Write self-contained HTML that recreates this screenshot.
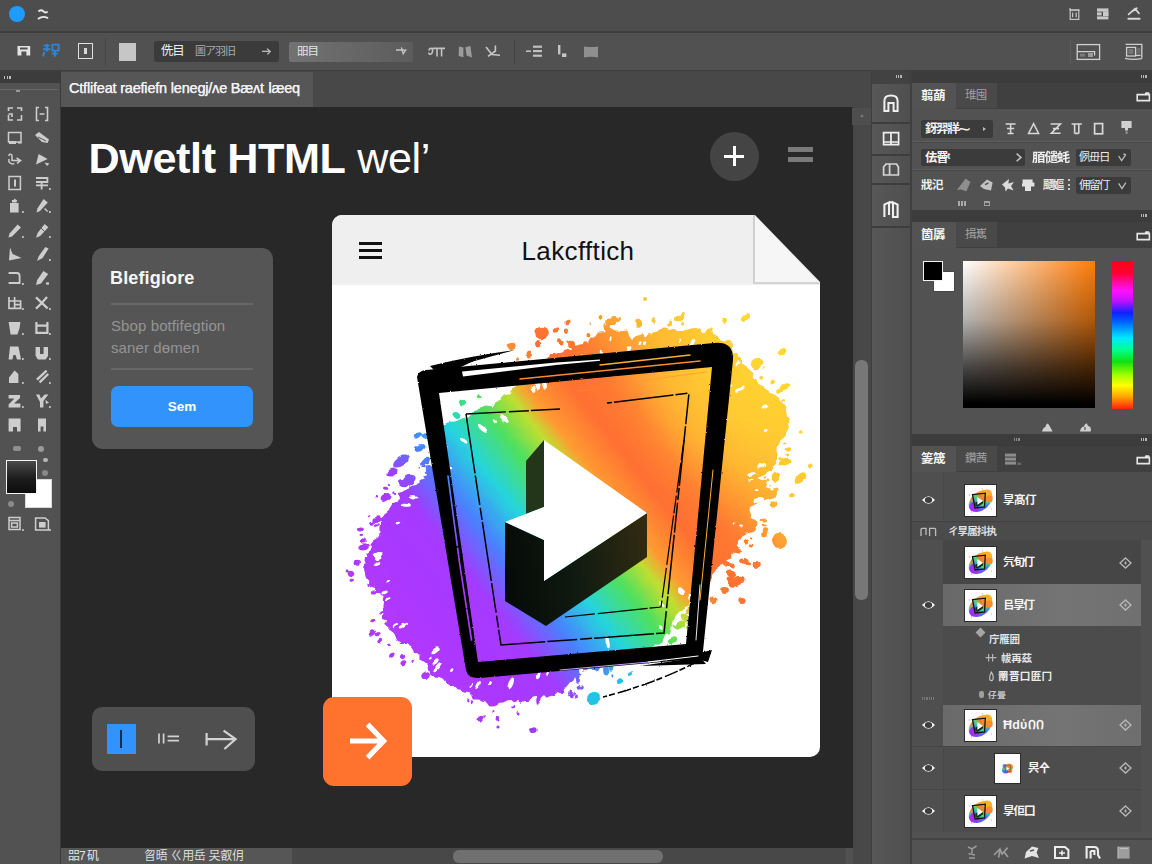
<!DOCTYPE html>
<html lang="en">
<head>
<meta charset="utf-8">
<title>Dwetlt HTML wel</title>
<style>
*{box-sizing:border-box;margin:0;padding:0}
html,body{width:1152px;height:864px;overflow:hidden;background:#282828}
body{font-family:"Liberation Sans","Noto Sans CJK SC",sans-serif;color:#e6e6e6;position:relative}
.abs{position:absolute}
.cj{font-family:"Liberation Sans","Noto Sans CJK SC",sans-serif;white-space:nowrap;line-height:1}
svg{position:absolute;overflow:visible}
/* ---------- top bars ---------- */
#title{left:0;top:0;width:1152px;height:32px;background:#4d4d4d}
#titleline{left:0;top:31px;width:1152px;height:2px;background:#3d3d3d}
#opts{left:0;top:33px;width:1152px;height:38px;background:#515151}
#optsline{left:0;top:70px;width:1152px;height:1px;background:#3f3f3f}
/* ---------- left toolbar ---------- */
#tools{left:0;top:71px;width:60px;height:793px;background:#525252}
#toolshead{left:0;top:71px;width:60px;height:12px;background:#3c3c3c}
#toolsedge{left:60px;top:71px;width:1px;height:793px;background:#3a3a3a}
/* ---------- tab bar ---------- */
#tabbar{left:61px;top:71px;width:811px;height:36px;background:#484848}
#tab{left:61px;top:72px;width:252px;height:35px;background:#565656}
#tabtxt{left:69px;top:80px;font-size:14.5px;color:#f2f2f2;letter-spacing:-0.2px;white-space:nowrap;text-shadow:0 0 .6px #ddd;-webkit-text-stroke:.25px #f2f2f2}
/* ---------- canvas ---------- */
#canvas{left:61px;top:107px;width:792px;height:741px;background:#282828}
#vscroll{left:853px;top:107px;width:18px;height:741px;background:#484848}
#vthumb{left:855px;top:360px;width:13px;height:240px;border-radius:6px;background:#777}
#status{left:61px;top:848px;width:811px;height:16px;background:#484848}
#hthumb{left:453px;top:850px;width:210px;height:13px;border-radius:6px;background:#707070}
/* ---------- right column ---------- */
#rgap{left:871px;top:71px;width:281px;height:793px;background:#3e3e3e}
#strip{left:872px;top:84px;width:39px;height:780px;background:linear-gradient(90deg,#575757,#4f4f4f)}
#rpanel{left:912px;top:71px;width:240px;height:793px;background:#525252}
</style>
</head>
<body>
<!-- top bars -->
<div id="title" class="abs"></div>
<div id="titleline" class="abs"></div>
<div id="opts" class="abs"></div>
<div id="optsline" class="abs"></div>
<!-- left toolbar -->
<div id="tools" class="abs"></div>
<div id="toolshead" class="abs"></div>
<div id="toolsedge" class="abs"></div>
<!-- tab bar -->
<div id="tabbar" class="abs"></div>
<div id="tab" class="abs"></div>
<div id="tabtxt" class="abs">Ctflifeat raefiefn lenegj/ʌe Bæʌt ⅼæeq</div>
<!-- canvas -->
<div id="canvas" class="abs"></div>
<div id="vscroll" class="abs"></div>
<div id="vthumb" class="abs"></div>
<div id="status" class="abs"></div>
<div id="hthumb" class="abs"></div>
<!-- right column -->
<div id="rgap" class="abs"></div>
<div id="strip" class="abs"></div>
<div id="rpanel" class="abs"></div>

<!-- title bar content -->
<div class="abs" style="left:9px;top:6px;width:16px;height:16px;border-radius:50%;background:#1e9bff"></div>
<svg style="left:37px;top:8px" width="12" height="13" viewBox="0 0 12 13"><path d="M2 3 Q4.4 1.2 6.2 3.2 T10 4 M1.6 10.6 Q5.6 7.6 10.4 9.8" fill="none" stroke="#e8e8e8" stroke-width="1.9" stroke-linecap="round"/></svg>
<svg style="left:1068px;top:7px" width="76" height="15" viewBox="0 0 76 15">
 <g fill="none" stroke="#c4c4c4" stroke-width="1.2">
  <rect x="2.2" y="3" width="8.6" height="9.4"/><path d="M2 1 V3 M4.6 5.4 V10.2 M8.2 5.4 V10.2 M1.6 3.2 H11.6"/>
 </g>
 <g fill="#c9c9c9"><rect x="29" y="1.4" width="11.4" height="3.2"/><rect x="29" y="5.4" width="4.6" height="3"/><rect x="35" y="4.4" width="5.6" height="4.6"/><rect x="29" y="9.4" width="11.4" height="3"/></g>
 <g fill="none" stroke="#d6d6d6" stroke-width="1.7" stroke-linecap="round"><path d="M60.6 7.4 L67 1.6 L71 6.4 M64 4.6 L68.8 1.2"/><path d="M60.4 11.8 H71.6" stroke-width="2"/></g>
</svg>
<!-- options bar content -->
<svg style="left:16px;top:43px" width="16" height="15" viewBox="0 0 16 15"><path d="M1.5 3 H14.2 V12.6 H10.4 V8.4 H5.4 V12.6 H1.5 Z M4 4.6 H11.6 V6.4 H4 Z" fill="#e4e4e4" fill-rule="evenodd"/></svg>
<svg style="left:41px;top:43px" width="20" height="16" viewBox="0 0 20 16"><path d="M2.4 2.6 H8.8 M6 1 V8.4 M2 6.2 H9.4 M3.6 8.8 L2 13.4 M11.4 1.6 H17.6 V7.6 H11.4 Z M13.8 7.6 V13.8 M10.8 10.6 H16.6" fill="none" stroke="#2f86d4" stroke-width="1.9"/></svg>
<div class="abs" style="left:78px;top:43px;width:15px;height:16px;border:1.6px solid #e0e0e0"></div>
<div class="abs" style="left:84px;top:48px;width:3px;height:6px;background:#d8d8d8"></div>
<div class="abs" style="left:105px;top:38px;width:1px;height:28px;background:#464646"></div>
<div class="abs" style="left:119px;top:43px;width:17px;height:18px;background:#c6c6c6"></div>
<div class="abs" style="left:154px;top:41px;width:125px;height:21px;border-radius:3px;background:#3b3b3b"></div>
<div class="abs cj" style="left:161px;top:45px;font-size:12.5px;color:#ececec;letter-spacing:-1.2px">侁目</div>
<div class="abs cj" style="left:195px;top:46px;font-size:11px;color:#a9a9a9;letter-spacing:-1px">圖ア羽旧</div>
<svg style="left:261px;top:47px" width="11" height="9" viewBox="0 0 11 9"><path d="M1 4.4 H9 M6 1.6 L9.2 4.6 L6.4 7.4" fill="none" stroke="#bdbdbd" stroke-width="1.3"/></svg>
<div class="abs" style="left:289px;top:42px;width:124px;height:20px;border-radius:2px;background:linear-gradient(90deg,#727272,#686868 45%,#5c5c5c)"></div>
<div class="abs cj" style="left:297px;top:46px;font-size:11.5px;color:#e4e4e4;letter-spacing:-1px">昍目</div>
<svg style="left:395px;top:46px" width="13" height="10" viewBox="0 0 13 10"><path d="M1 4 H9.6 M6.4 1.4 L8.2 7.8 L11.2 3.4" fill="none" stroke="#c8c8c8" stroke-width="1.3"/></svg>
<svg style="left:426px;top:42px" width="176" height="20" viewBox="0 0 176 20">
 <g fill="none" stroke="#c2c2c2" stroke-width="1.6"><path d="M3 8.6 C3 5.6 7 5.6 6.6 9 C6.2 13.2 2.6 13 2.8 10.6 M6.6 6.4 H19 M11 6.4 V14.4 M15.6 6.4 V14.4"/></g>
 <path d="M33 4.4 L37.4 5.6 V15.2 L32.6 14 Z M39.4 5.2 L44.4 4 L46 15.6 L40.6 13.6 Z" fill="#9c9c9c"/>
 <g fill="none" stroke="#c6c6c6" stroke-width="1.6"><path d="M60 5 L66 12.6 L74 13.2 M69.4 3.6 V9 L62 14.4"/></g>
 <rect x="88" y="-2" width="1" height="24" fill="#444"/>
 <g fill="#c0c0c0"><rect x="100" y="8.4" width="5" height="1.6"/><rect x="107" y="3.6" width="9" height="2.2"/><rect x="107" y="8" width="9" height="2.2"/><rect x="107" y="12.6" width="9" height="2.2"/></g>
 <g fill="#c4c4c4"><rect x="132" y="3" width="2.4" height="9.4"/><rect x="136" y="11.4" width="4.4" height="3.6"/></g>
 <path d="M158 4.4 C162 5.2 168 5.2 172 4.4 V15.4 C168 14.6 162 14.6 158 15.4 Z" fill="#8f8f8f"/>
</svg>
<div class="abs" style="left:1070px;top:40px;width:1px;height:24px;background:#5e5e5e"></div>
<svg style="left:1076px;top:43px" width="70" height="18" viewBox="0 0 70 18">
 <g fill="none" stroke="#d0d0d0" stroke-width="1.3"><rect x="1.2" y="1.6" width="22.4" height="14.8"/><path d="M1.2 8.6 H18.6 V12.4"/></g>
 <rect x="4" y="10.6" width="5" height="3" fill="#7a7a7a"/><rect x="12" y="10" width="5" height="4" fill="#9a9a9a"/>
 <g fill="none" stroke="#d0d0d0" stroke-width="1.3"><path d="M49.6 1.4 H65.8 V15.6 M49 15.4 C54 16.4 60 16.6 65.8 15.6"/><rect x="50.6" y="4.4" width="9" height="8.6"/><path d="M59.6 12.4 H64.6"/></g>
 <rect x="52.4" y="6" width="5" height="5" fill="#777"/><rect x="61" y="5" width="3.6" height="5.6" fill="#6a6a6a"/>
</svg>
<!--TOPBAR-->
<!-- left toolbar icons -->
<div class="abs" style="left:4px;top:76px;width:7px;height:3px;background:repeating-linear-gradient(90deg,#bdbdbd 0 1.4px,transparent 1.4px 2.6px)"></div>
<div class="abs" style="left:0;top:89px;width:58px;height:1px;background:#666"></div>
<div class="abs" style="left:16px;top:90px;width:4px;height:2px;background:#9a9a9a"></div>
<svg style="left:7px;top:106px" width="18" height="17" viewBox="0 0 18 17"><path d="M1.5 5 V2 H6 M10 2 H14.5 V5 M14.5 9 V14 H10 M6 14 H1.5 V9 M1.5 8 H5 V11" fill="none" stroke="#cdcdcd" stroke-width="1.6"/></svg>
<svg style="left:34px;top:106px" width="18" height="17" viewBox="0 0 18 17"><path d="M5 1.5 H2.5 V14.5 H5 M11 1.5 H13.5 V14.5 H11 M5.6 8 H10.4" fill="none" stroke="#cdcdcd" stroke-width="1.6"/></svg>
<svg style="left:7px;top:130px" width="18" height="17" viewBox="0 0 18 17"><path d="M1.5 2.5 H14 V12 H1.5 Z" fill="none" stroke="#cdcdcd" stroke-width="1.5"/><path d="M2 11 H9 V14 H2 Z" fill="#cdcdcd"/><path d="M11 12 H14.6 V13.6 H11 Z" fill="#cdcdcd"/></svg>
<svg style="left:34px;top:130px" width="18" height="17" viewBox="0 0 18 17"><path d="M1 5 L5 2 L15 9.4 L13.6 13 L8 12 Z" fill="#cdcdcd"/><path d="M4 7 L12 11" fill="none" stroke="#555" stroke-width="1"/></svg>
<svg style="left:7px;top:152px" width="18" height="17" viewBox="0 0 18 17"><path d="M2 4 C2 1.4 5 1.6 5 4 V8.6 H12 M9.6 6 L13.6 8.6 L10 11.4 M2 7 C1 10.6 4 12.6 7.4 11.6" fill="none" stroke="#cdcdcd" stroke-width="1.5"/></svg>
<svg style="left:34px;top:152px" width="18" height="17" viewBox="0 0 18 17"><path d="M2 12.6 L4.6 2 L13.6 7 Z" fill="#cdcdcd"/><path d="M10.6 10.6 L15.4 11.6 L13 14 Z" fill="#cdcdcd"/></svg>
<svg style="left:7px;top:175px" width="18" height="17" viewBox="0 0 18 17"><path d="M2 1.6 H13.4 V14.4 H2 Z" fill="none" stroke="#cdcdcd" stroke-width="1.5"/><path d="M7 4.4 H9 V11.4 H7 Z" fill="#cdcdcd"/></svg>
<svg style="left:34px;top:175px" width="18" height="17" viewBox="0 0 18 17"><path d="M2 3 H13.4 V7 H2 M2 10.4 H14 M7.6 7 V14.4" fill="none" stroke="#cdcdcd" stroke-width="1.8"/><rect x="15" y="13" width="1.8" height="2" fill="#bdbdbd"/></svg>
<svg style="left:7px;top:198px" width="18" height="17" viewBox="0 0 18 17"><path d="M3 5 H11.6 V14.6 H3 Z M5 2 H9.6 V4.4 H5 Z" fill="#cdcdcd"/><path d="M7 1 L10 3" fill="none" stroke="#cdcdcd" stroke-width="1.2"/><rect x="15" y="13" width="1.8" height="2" fill="#bdbdbd"/></svg>
<svg style="left:34px;top:198px" width="18" height="17" viewBox="0 0 18 17"><path d="M9.6 1 L13.8 4.6 L6 13 L2.6 14.6 L3.4 10.4 Z" fill="#cdcdcd"/><path d="M10.6 10.6 L13.6 13.6" fill="none" stroke="#cdcdcd" stroke-width="1.4"/><rect x="15" y="13" width="1.8" height="2" fill="#bdbdbd"/></svg>
<svg style="left:7px;top:223px" width="18" height="17" viewBox="0 0 18 17"><path d="M10.6 1.4 L14 4.4 L5 13.6 L1.4 14.4 L2.6 10.4 Z" fill="#cdcdcd"/><rect x="15" y="13" width="1.8" height="2" fill="#bdbdbd"/></svg>
<svg style="left:34px;top:223px" width="18" height="17" viewBox="0 0 18 17"><path d="M10.6 1 L14.4 4.2 L6.2 13 L2 14.8 L3.6 10 Z" fill="#cdcdcd"/><path d="M6 4 L10.6 8.6" fill="none" stroke="#555" stroke-width="1"/><rect x="15" y="13" width="1.8" height="2" fill="#bdbdbd"/></svg>
<svg style="left:7px;top:246px" width="18" height="17" viewBox="0 0 18 17"><path d="M3 1.4 L5.6 8 L14.6 12 L2 14.4 Z" fill="#cdcdcd"/></svg>
<svg style="left:34px;top:246px" width="18" height="17" viewBox="0 0 18 17"><path d="M11.4 1 L14.6 2.6 L8.6 12 L3 15 L4.6 10.4 Z" fill="#cdcdcd"/><rect x="15" y="13" width="1.8" height="2" fill="#bdbdbd"/></svg>
<svg style="left:7px;top:270px" width="18" height="17" viewBox="0 0 18 17"><path d="M1.6 3 H10 C12.6 3 12.6 5 12.6 6 V13 H1.6" fill="none" stroke="#cdcdcd" stroke-width="1.8"/><rect x="15" y="13" width="1.8" height="2" fill="#bdbdbd"/></svg>
<svg style="left:34px;top:270px" width="18" height="17" viewBox="0 0 18 17"><path d="M9.4 1 L14.2 4 L7 13.4 L2 15 L3.2 10 Z" fill="#cdcdcd"/><path d="M12 12.4 H15 V14.6 H12 Z" fill="#cdcdcd"/></svg>
<svg style="left:7px;top:295px" width="18" height="17" viewBox="0 0 18 17"><path d="M2 2 V13.4 H13.6 V6 H2 M7.6 2 V13.4 M7.6 9.6 H13.6" fill="none" stroke="#cdcdcd" stroke-width="1.7"/><rect x="15" y="13" width="1.8" height="2" fill="#bdbdbd"/></svg>
<svg style="left:34px;top:295px" width="18" height="17" viewBox="0 0 18 17"><path d="M2 2.4 L13.6 13.4 M13 2 L7.8 8 L2 13.6" fill="none" stroke="#cdcdcd" stroke-width="2.2"/><rect x="15" y="13" width="1.8" height="2" fill="#bdbdbd"/></svg>
<svg style="left:7px;top:320px" width="18" height="17" viewBox="0 0 18 17"><path d="M1.6 2 H13.4 L12.6 8 L10.4 14.4 H3.6 L2.6 8 Z" fill="#cdcdcd"/><rect x="15" y="13" width="1.8" height="2" fill="#bdbdbd"/></svg>
<svg style="left:34px;top:320px" width="18" height="17" viewBox="0 0 18 17"><path d="M2.4 2 V12.8 H13.4 V2 M2.4 5.6 H13.4" fill="none" stroke="#cdcdcd" stroke-width="2.2"/><rect x="15" y="13" width="1.8" height="2" fill="#bdbdbd"/></svg>
<svg style="left:7px;top:345px" width="18" height="17" viewBox="0 0 18 17"><path d="M3 1.6 H11.4 L12.6 7 L14 14.6 H10 L8.6 10 H6.4 L5.4 14.6 H1.6 Z" fill="#cdcdcd"/><rect x="15" y="13" width="1.8" height="2" fill="#bdbdbd"/></svg>
<svg style="left:34px;top:345px" width="18" height="17" viewBox="0 0 18 17"><path d="M1.6 2 H6 V9 H9.6 V2 H14 V11 L11.6 14.4 H4 L1.6 11 Z" fill="#cdcdcd"/><rect x="15" y="13" width="1.8" height="2" fill="#bdbdbd"/></svg>
<svg style="left:7px;top:369px" width="18" height="17" viewBox="0 0 18 17"><path d="M7.6 1.4 L11.4 5 V14 H2 V8.6 Z" fill="#cdcdcd"/><rect x="15" y="13" width="1.8" height="2" fill="#bdbdbd"/></svg>
<svg style="left:34px;top:369px" width="18" height="17" viewBox="0 0 18 17"><path d="M12.6 1.6 L3 10.6 M14.2 5 L5.6 13.4" fill="none" stroke="#cdcdcd" stroke-width="2.4"/><rect x="15" y="13" width="1.8" height="2" fill="#bdbdbd"/></svg>
<svg style="left:7px;top:393px" width="18" height="17" viewBox="0 0 18 17"><path d="M1.6 2 H13 V5 L7 10.6 H13.4 V14.4 H1.6 V11.4 L7.4 5.4 H1.6 Z" fill="#cdcdcd"/><rect x="15" y="13" width="1.8" height="2" fill="#bdbdbd"/></svg>
<svg style="left:34px;top:393px" width="18" height="17" viewBox="0 0 18 17"><path d="M2 1.6 H5.4 L7 5.4 L10.6 1.6 H14.4 L9.4 8 V14.6 H6 V9 Z" fill="#cdcdcd"/><path d="M11.4 7 L15 9.6 L12 11 Z" fill="#cdcdcd"/><rect x="15" y="13" width="1.8" height="2" fill="#bdbdbd"/></svg>
<svg style="left:7px;top:417px" width="18" height="17" viewBox="0 0 18 17"><path d="M1.6 1.6 H13.6 V14.4 H10 V10 H6 V14.4 H1.6 Z M5 4.6 H10 V7 H5 Z" fill="#cdcdcd"/></svg>
<svg style="left:34px;top:417px" width="18" height="17" viewBox="0 0 18 17"><path d="M4 1.4 H12 V14.6 H9.4 V9.6 H6.6 V14.6 H4 Z" fill="#cdcdcd"/></svg>
<div class="abs" style="left:13px;top:446px;width:8px;height:5px;border-radius:2px;background:#8f8f8f"></div>
<div class="abs" style="left:38px;top:446px;width:6px;height:6px;border-radius:3px;background:#9a9a9a"></div>
<div class="abs" style="left:43px;top:458px;width:5px;height:4px;border-radius:2px;background:#b5b5b5"></div>
<div class="abs" style="left:42px;top:470px;width:6px;height:6px;border-radius:3px;background:#888"></div>
<div class="abs" style="left:8px;top:501px;width:6px;height:6px;border-radius:3px;background:#8a8a8a"></div>
<div class="abs" style="left:25px;top:479px;width:27px;height:29px;background:#fff;border:1px solid #d8d8d8;box-shadow:0 0 0 1px #555"></div>
<div class="abs" style="left:6px;top:460px;width:31px;height:34px;background:linear-gradient(180deg,#4a4a4a,#1c1c1c 55%,#0c0c0c);border:1.6px solid #f4f4f4"></div>
<svg style="left:7px;top:516px" width="18" height="17" viewBox="0 0 18 17"><path d="M2 1.6 H13 V13.6 H2 Z M2 4.4 H13 M4.6 7 H10.4 V11 H4.6 Z" fill="none" stroke="#cdcdcd" stroke-width="1.5"/><rect x="15" y="13" width="1.8" height="2" fill="#bdbdbd"/></svg>
<svg style="left:34px;top:516px" width="18" height="17" viewBox="0 0 18 17"><path d="M1.6 2 H11 L14.4 4.6 V14 H1.6 Z" fill="none" stroke="#cdcdcd" stroke-width="1.5"/><path d="M5 6 H11.6 V11.6 H5 Z" fill="#cdcdcd"/><rect x="15" y="13" width="1.8" height="2" fill="#bdbdbd"/></svg>
<!--TOOLS-->

<!-- canvas content -->
<div class="abs" style="left:88.5px;top:133px;font-size:43.2px;line-height:50px;color:#fff;white-space:nowrap;letter-spacing:-0.4px"><b>Dwetlt HTML</b> wel’</div>
<div class="abs" style="left:710px;top:132px;width:49px;height:49px;border-radius:50%;background:#444"></div>
<div class="abs" style="left:724px;top:155px;width:20px;height:2.6px;background:#fff"></div>
<div class="abs" style="left:733px;top:146px;width:2.6px;height:20px;background:#fff"></div>
<div class="abs" style="left:788px;top:147px;width:25px;height:4.5px;background:#7a7a7a"></div>
<div class="abs" style="left:788px;top:157px;width:25px;height:4.5px;background:#7a7a7a"></div>
<!-- left card -->
<div class="abs" style="left:92px;top:248px;width:181px;height:201px;border-radius:11px;background:#555"></div>
<div class="abs" style="left:110px;top:267px;font-size:18px;line-height:22px;color:#f7f7f7;font-weight:bold;white-space:nowrap;letter-spacing:0.15px">Blefigiore</div>
<div class="abs" style="left:111px;top:303px;width:142px;height:2px;background:#676767"></div>
<div class="abs" style="left:111px;top:315px;font-size:15px;line-height:21.5px;color:#949494;white-space:nowrap;letter-spacing:0.1px">Sbop botfifegtion<br>saner dөmen</div>
<div class="abs" style="left:111px;top:368px;width:142px;height:2px;background:#676767"></div>
<div class="abs" style="left:111px;top:386px;width:142px;height:41px;border-radius:7px;background:#3393fc;color:#fff;font-size:13.5px;font-weight:bold;text-align:center;line-height:42px">Sem</div>
<!-- bottom-left widget -->
<div class="abs" style="left:92px;top:707px;width:163px;height:64px;border-radius:10px;background:#4f4f4f"></div>
<div class="abs" style="left:107px;top:724px;width:29px;height:30px;background:#3393fc"></div>
<div class="abs" style="left:120px;top:730px;width:2.4px;height:18px;background:#1c2c44"></div>
<svg style="left:156px;top:730px" width="84" height="22" viewBox="0 0 84 22"><g fill="none" stroke="#d2d2d2" stroke-width="1.7"><path d="M3 3.6 V13.6 M7.6 3.6 V13.6 M11.6 6.4 H23 M11.6 10.6 H23"/><path d="M50.6 3 V15.4 M50.6 9.2 H78 M67.6 0.6 L79.6 9.2 L68.4 19" stroke-width="2.2" stroke-linejoin="miter"/></g></svg>
<!-- document card -->
<div class="abs" style="left:332px;top:215px;width:488px;height:542px;border-radius:10px;background:#fff;overflow:hidden">
 <div style="position:absolute;left:0;top:0;width:488px;height:70px;background:#efefef"></div>
</div>
<svg style="left:0;top:0" width="1152" height="864" viewBox="0 0 1152 864">
 <path d="M753 213 H822 V284 Z" fill="#282828"/>
 <path d="M754 215 L819 283 H754 Z" fill="#f6f6f6"/>
 <path d="M754 215 V283 H819" fill="none" stroke="#c9c9c9" stroke-width="1.6"/>
 <path d="M359 243.5 H382 M359 250.5 H382 M359 257.5 H382" stroke="#111" stroke-width="3"/>
</svg>
<div class="abs" style="left:334px;top:235px;width:488px;text-align:center;font-size:26px;line-height:32px;color:#111;letter-spacing:0.35px;white-space:nowrap">Lakcfftich</div>
<!--ART_START--><svg style="left:0;top:0" width="1152" height="864" viewBox="0 0 1152 864">
<defs>
<linearGradient id="rb" gradientUnits="userSpaceOnUse" x1="412.2" y1="641.1" x2="774.7" y2="357.8"><stop offset="0.000" stop-color="#b038ff"/><stop offset="0.185" stop-color="#a43aff"/><stop offset="0.270" stop-color="#4a80ff"/><stop offset="0.352" stop-color="#25d5dd"/><stop offset="0.435" stop-color="#4ee060"/><stop offset="0.496" stop-color="#c0de30"/><stop offset="0.535" stop-color="#ff9a30"/><stop offset="0.613" stop-color="#ff7030"/><stop offset="0.691" stop-color="#ff7a30"/><stop offset="0.772" stop-color="#ffa430"/><stop offset="0.843" stop-color="#ffc630"/><stop offset="1.000" stop-color="#ffd830"/></linearGradient>
<linearGradient id="dk" gradientUnits="userSpaceOnUse" x1="505" y1="560" x2="650" y2="540"><stop offset="0" stop-color="#060b08"/><stop offset=".45" stop-color="#0f1a10"/><stop offset="1" stop-color="#322c12"/></linearGradient>
<path id="bp" d="M362.0 568.0 L363.4 565.5 L363.8 563.2 L365.8 560.5 L367.6 557.9 L367.0 555.7 L366.4 553.6 L370.3 550.6 L372.0 548.0 L370.5 545.5 L373.1 542.4 L373.4 539.7 L379.0 536.2 L379.4 533.4 L380.6 530.6 L380.3 527.8 L381.0 525.0 L380.7 522.4 L378.0 519.8 L381.9 517.1 L383.4 514.5 L386.6 511.9 L389.5 509.3 L391.2 506.7 L392.0 504.0 L392.0 502.4 L395.9 501.1 L399.0 499.8 L400.4 498.3 L401.0 496.8 L398.6 494.9 L397.8 493.1 L402.0 492.0 L403.9 490.7 L407.1 489.6 L409.2 488.3 L409.2 486.7 L410.8 485.3 L413.8 484.2 L418.4 483.4 L420.0 482.0 L422.0 480.4 L425.3 479.1 L423.2 476.4 L426.1 475.0 L424.6 472.4 L427.1 470.9 L428.2 469.1 L432.0 468.0 L433.3 463.3 L433.6 458.3 L436.9 454.4 L440.2 450.5 L440.9 445.5 L439.9 439.6 L439.5 433.9 L442.0 430.0 L443.2 426.5 L445.5 423.8 L448.8 421.7 L454.8 421.6 L458.9 420.2 L462.7 418.6 L466.9 417.2 L470.0 415.0 L473.6 411.0 L479.9 409.6 L484.7 406.5 L492.9 407.5 L495.8 401.8 L501.1 399.5 L505.1 395.2 L511.0 394.0 L512.4 388.0 L515.5 385.4 L517.7 381.0 L521.2 379.4 L524.1 376.4 L526.4 372.2 L529.0 368.5 L532.0 366.0 L534.9 363.6 L537.8 361.0 L541.9 363.1 L545.2 362.3 L548.1 359.3 L550.4 353.3 L553.8 353.0 L557.0 352.0 L560.3 351.9 L563.5 350.9 L566.7 349.7 L570.2 351.2 L573.3 345.9 L576.6 345.6 L579.8 344.5 L583.0 344.0 L585.8 341.0 L588.4 342.9 L591.4 337.5 L594.0 337.4 L597.2 332.5 L599.8 332.5 L602.4 332.3 L605.0 332.0 L608.6 331.4 L612.4 329.4 L615.6 330.6 L619.1 330.6 L622.4 331.3 L626.1 330.6 L628.4 335.5 L631.0 339.0 L635.3 335.9 L639.0 334.9 L642.8 333.6 L645.0 336.6 L649.6 333.2 L652.8 333.4 L657.1 330.8 L661.0 329.0 L665.9 328.4 L669.9 329.9 L675.1 328.8 L678.7 331.0 L683.4 331.0 L689.4 328.7 L694.3 328.3 L698.0 330.0 L701.5 329.5 L702.4 332.9 L707.0 330.8 L709.6 331.7 L712.9 331.7 L714.2 334.4 L716.4 335.8 L718.0 338.0 L720.6 340.5 L724.2 341.7 L729.4 341.1 L732.3 343.2 L733.0 347.7 L733.9 351.9 L737.2 353.6 L738.0 358.0 L741.2 359.1 L740.7 363.8 L743.8 365.1 L746.7 366.5 L749.1 368.4 L751.4 370.5 L753.6 372.7 L752.0 378.0 L755.3 379.6 L756.2 383.0 L759.0 384.9 L763.2 385.9 L764.6 388.7 L767.9 390.4 L770.1 392.7 L774.0 394.0 L779.0 396.9 L780.1 402.2 L784.7 405.4 L786.0 410.5 L786.7 415.8 L789.1 420.3 L789.4 425.9 L786.0 433.0 L785.4 436.0 L779.8 440.8 L779.8 443.6 L777.5 447.2 L777.3 450.1 L777.3 452.9 L777.3 455.8 L776.0 459.0 L774.5 461.2 L775.0 462.8 L771.9 465.4 L771.8 467.2 L772.3 468.9 L767.8 471.8 L763.6 474.6 L757.0 478.0 L761.3 479.9 L764.3 482.0 L767.3 484.2 L765.6 487.1 L770.1 489.1 L774.1 491.2 L777.2 493.3 L776.0 496.0 L773.7 497.3 L767.5 498.9 L763.3 500.4 L760.4 501.7 L757.4 503.0 L755.5 504.3 L752.4 505.7 L750.0 507.0 L749.5 509.4 L750.2 511.7 L751.3 514.1 L750.6 516.5 L753.5 518.9 L757.3 521.4 L757.4 523.7 L757.0 526.0 L755.4 527.9 L755.9 530.0 L753.6 531.9 L746.8 533.4 L743.7 535.2 L740.8 537.0 L739.8 539.1 L738.0 541.0 L738.0 543.5 L736.3 545.8 L739.0 548.9 L737.3 551.1 L734.4 553.0 L731.2 554.8 L731.4 557.5 L727.0 559.0 L724.7 561.2 L721.3 563.1 L720.0 565.6 L717.5 567.7 L717.0 570.7 L715.4 573.2 L712.3 575.0 L712.0 578.0 L710.9 580.5 L709.3 582.8 L705.9 584.1 L704.0 586.1 L699.3 586.6 L697.3 588.7 L696.2 591.3 L692.0 592.0 L689.3 593.7 L688.1 596.4 L688.5 600.4 L688.3 603.9 L687.5 607.0 L684.4 608.1 L682.8 610.6 L680.0 612.0 L678.1 614.6 L676.5 617.5 L675.1 620.7 L673.0 623.0 L672.1 626.8 L670.3 629.5 L669.2 633.2 L666.0 634.0 L663.4 637.4 L662.2 642.7 L658.5 644.4 L654.0 644.7 L650.7 647.0 L648.0 650.3 L643.8 650.8 L640.0 652.0 L635.6 655.2 L629.9 655.2 L624.6 656.5 L619.1 656.6 L614.6 661.1 L609.9 664.0 L605.2 667.6 L600.0 668.0 L597.8 671.5 L595.1 670.3 L592.4 669.7 L589.8 668.5 L587.3 670.3 L584.8 670.0 L582.4 673.6 L580.0 676.0 L578.7 678.7 L577.5 680.2 L576.2 680.0 L575.0 677.1 L573.7 680.1 L572.4 682.4 L571.2 682.9 L570.0 682.0 L566.4 686.6 L563.0 690.4 L559.5 693.6 L556.6 691.9 L553.0 695.5 L549.8 696.3 L546.5 697.8 L544.0 695.0 L540.2 698.3 L537.4 696.9 L534.2 697.3 L530.8 698.6 L527.4 700.0 L524.4 699.9 L520.5 702.8 L518.0 701.0 L514.0 702.3 L511.3 699.9 L507.6 700.2 L503.3 702.4 L499.5 702.8 L494.9 705.3 L491.3 705.4 L488.0 705.0 L485.5 701.5 L481.9 700.4 L478.2 699.4 L473.8 699.5 L472.1 695.1 L469.0 693.0 L464.8 692.5 L462.0 690.0 L457.4 689.3 L454.9 685.7 L449.3 686.2 L446.5 683.2 L443.9 679.8 L440.2 678.0 L435.1 677.6 L432.0 675.0 L429.1 672.5 L428.0 668.3 L426.5 664.4 L423.6 661.9 L420.4 659.7 L420.5 654.5 L415.3 653.9 L414.0 650.0 L411.4 646.6 L407.6 644.0 L400.4 644.0 L397.1 641.2 L395.4 637.3 L393.9 633.3 L390.5 630.4 L388.0 627.0 L385.2 625.0 L387.1 620.4 L383.2 619.0 L382.8 615.6 L383.9 611.6 L383.5 608.3 L383.5 604.7 L384.0 601.0 L383.8 599.0 L384.7 596.5 L382.9 595.2 L380.9 594.0 L378.5 592.8 L374.7 592.2 L375.1 590.0 L375.0 588.0 L370.6 586.4 L369.1 583.8 L369.2 580.8 L366.4 578.6 L365.3 576.0 L365.7 572.9 L363.6 570.5 Z"/><clipPath id="bc"><use href="#bp"/></clipPath>
<radialGradient id="yl" gradientUnits="userSpaceOnUse" cx="795" cy="345" r="195"><stop offset="0" stop-color="#ffd832"/><stop offset=".45" stop-color="#ffcc30"/><stop offset=".7" stop-color="#ffb830" stop-opacity=".75"/><stop offset=".88" stop-color="#ff9a30" stop-opacity=".3"/><stop offset="1" stop-color="#ff8a30" stop-opacity="0"/></radialGradient>
<filter id="rough" x="-5%" y="-5%" width="110%" height="110%"><feTurbulence type="fractalNoise" baseFrequency="0.09" numOctaves="2" seed="3" result="n"/><feDisplacementMap in="SourceGraphic" in2="n" scale="5" xChannelSelector="R" yChannelSelector="G"/></filter>
<filter id="rough2" x="-5%" y="-5%" width="110%" height="110%"><feTurbulence type="fractalNoise" baseFrequency="0.5" numOctaves="1" seed="8" result="n"/><feDisplacementMap in="SourceGraphic" in2="n" scale="2.2" xChannelSelector="R" yChannelSelector="G"/></filter>
</defs>
<g filter="url(#rough)"><g fill="url(#rb)"><use href="#bp"/><ellipse cx="364.2" cy="540.5" rx="2.8" ry="2.0" transform="rotate(173 364.2 540.5)"/><ellipse cx="385.7" cy="488.3" rx="2.7" ry="1.5" transform="rotate(-172 385.7 488.3)"/><ellipse cx="426.3" cy="462.6" rx="1.8" ry="1.5" transform="rotate(-161 426.3 462.6)"/><ellipse cx="494.3" cy="383.2" rx="2.6" ry="2.0" transform="rotate(-123 494.3 383.2)"/><ellipse cx="581.8" cy="687.6" rx="2.1" ry="2.0" transform="rotate(89 581.8 687.6)"/><ellipse cx="394.7" cy="493.8" rx="1.5" ry="1.2" transform="rotate(-173 394.7 493.8)"/><ellipse cx="361.3" cy="534.9" rx="1.8" ry="1.2" transform="rotate(175 361.3 534.9)"/><ellipse cx="638.1" cy="321.6" rx="3.0" ry="3.0" transform="rotate(-73 638.1 321.6)"/><ellipse cx="575.4" cy="697.0" rx="1.6" ry="1.5" transform="rotate(91 575.4 697.0)"/><ellipse cx="368.1" cy="584.5" rx="1.8" ry="1.5" transform="rotate(162 368.1 584.5)"/><ellipse cx="561.5" cy="342.8" rx="2.8" ry="2.0" transform="rotate(-96 561.5 342.8)"/><ellipse cx="614.5" cy="323.2" rx="1.8" ry="1.5" transform="rotate(-80 614.5 323.2)"/><ellipse cx="378.3" cy="525.3" rx="1.6" ry="1.0" transform="rotate(177 378.3 525.3)"/><ellipse cx="569.6" cy="693.1" rx="2.6" ry="1.5" transform="rotate(93 569.6 693.1)"/><ellipse cx="426.4" cy="436.7" rx="4.3" ry="3.0" transform="rotate(-153 426.4 436.7)"/><ellipse cx="764.3" cy="525.9" rx="2.7" ry="1.5" transform="rotate(3 764.3 525.9)"/><ellipse cx="800.7" cy="431.9" rx="2.0" ry="1.5" transform="rotate(-21 800.7 431.9)"/><ellipse cx="774.0" cy="474.1" rx="1.1" ry="1.0" transform="rotate(-12 774.0 474.1)"/><ellipse cx="708.3" cy="331.0" rx="4.2" ry="2.5" transform="rotate(-55 708.3 331.0)"/><ellipse cx="377.7" cy="634.2" rx="2.1" ry="2.0" transform="rotate(149 377.7 634.2)"/><ellipse cx="560.0" cy="340.8" rx="2.6" ry="2.0" transform="rotate(-96 560.0 340.8)"/><ellipse cx="787.7" cy="455.0" rx="1.5" ry="1.5" transform="rotate(-16 787.7 455.0)"/><ellipse cx="761.0" cy="378.3" rx="2.6" ry="2.0" transform="rotate(-37 761.0 378.3)"/><ellipse cx="699.7" cy="605.9" rx="2.1" ry="1.5" transform="rotate(37 699.7 605.9)"/><ellipse cx="346.6" cy="570.0" rx="2.0" ry="1.5" transform="rotate(167 346.6 570.0)"/><ellipse cx="377.9" cy="516.8" rx="1.6" ry="1.5" transform="rotate(180 377.9 516.8)"/><ellipse cx="606.7" cy="670.4" rx="4.0" ry="2.5" transform="rotate(80 606.7 670.4)"/><ellipse cx="688.5" cy="626.0" rx="1.6" ry="1.5" transform="rotate(45 688.5 626.0)"/><ellipse cx="350.5" cy="573.4" rx="3.9" ry="3.5" transform="rotate(166 350.5 573.4)"/><ellipse cx="612.4" cy="676.0" rx="1.7" ry="1.0" transform="rotate(78 612.4 676.0)"/><ellipse cx="519.0" cy="714.0" rx="1.6" ry="1.5" transform="rotate(107 519.0 714.0)"/><ellipse cx="374.0" cy="522.5" rx="1.6" ry="1.2" transform="rotate(178 374.0 522.5)"/><ellipse cx="731.0" cy="574.4" rx="5.4" ry="3.5" transform="rotate(21 731.0 574.4)"/><ellipse cx="683.3" cy="625.2" rx="1.9" ry="1.2" transform="rotate(47 683.3 625.2)"/><ellipse cx="644.2" cy="653.5" rx="3.7" ry="3.5" transform="rotate(65 644.2 653.5)"/><ellipse cx="691.7" cy="599.0" rx="2.4" ry="2.0" transform="rotate(37 691.7 599.0)"/><ellipse cx="613.4" cy="320.1" rx="4.2" ry="3.0" transform="rotate(-80 613.4 320.1)"/><ellipse cx="792.3" cy="495.1" rx="3.2" ry="2.0" transform="rotate(-5 792.3 495.1)"/><ellipse cx="468.7" cy="700.3" rx="1.9" ry="1.5" transform="rotate(121 468.7 700.3)"/><ellipse cx="413.0" cy="661.4" rx="1.5" ry="1.5" transform="rotate(139 413.0 661.4)"/><ellipse cx="377.4" cy="496.3" rx="1.9" ry="1.2" transform="rotate(-175 377.4 496.3)"/><ellipse cx="372.9" cy="621.0" rx="2.7" ry="2.0" transform="rotate(153 372.9 621.0)"/><ellipse cx="713.5" cy="599.3" rx="4.1" ry="3.5" transform="rotate(32 713.5 599.3)"/><ellipse cx="429.0" cy="468.2" rx="3.2" ry="3.0" transform="rotate(-163 429.0 468.2)"/><ellipse cx="645.0" cy="660.6" rx="2.6" ry="2.0" transform="rotate(66 645.0 660.6)"/><ellipse cx="607.5" cy="328.9" rx="4.2" ry="3.5" transform="rotate(-81 607.5 328.9)"/><ellipse cx="776.0" cy="477.2" rx="4.3" ry="3.5" transform="rotate(-11 776.0 477.2)"/><ellipse cx="456.9" cy="415.6" rx="3.9" ry="3.0" transform="rotate(-141 456.9 415.6)"/><ellipse cx="528.8" cy="355.6" rx="4.0" ry="3.0" transform="rotate(-108 528.8 355.6)"/><ellipse cx="516.2" cy="374.3" rx="2.0" ry="1.2" transform="rotate(-114 516.2 374.3)"/><ellipse cx="357.3" cy="563.2" rx="2.7" ry="2.5" transform="rotate(168 357.3 563.2)"/><ellipse cx="600.6" cy="317.3" rx="2.4" ry="2.0" transform="rotate(-84 600.6 317.3)"/><ellipse cx="389.3" cy="484.9" rx="1.5" ry="1.2" transform="rotate(-171 389.3 484.9)"/><ellipse cx="746.5" cy="559.0" rx="2.2" ry="2.0" transform="rotate(15 746.5 559.0)"/><ellipse cx="391.4" cy="654.6" rx="2.7" ry="1.5" transform="rotate(143 391.4 654.6)"/><ellipse cx="737.7" cy="551.4" rx="3.3" ry="2.0" transform="rotate(13 737.7 551.4)"/><ellipse cx="744.3" cy="561.4" rx="4.3" ry="2.5" transform="rotate(16 744.3 561.4)"/><ellipse cx="574.1" cy="694.2" rx="1.7" ry="1.0" transform="rotate(92 574.1 694.2)"/><ellipse cx="763.9" cy="534.3" rx="2.8" ry="2.0" transform="rotate(6 763.9 534.3)"/><ellipse cx="578.7" cy="687.3" rx="2.5" ry="2.0" transform="rotate(90 578.7 687.3)"/><ellipse cx="724.5" cy="320.2" rx="2.6" ry="2.0" transform="rotate(-53 724.5 320.2)"/><ellipse cx="677.5" cy="318.5" rx="2.7" ry="2.5" transform="rotate(-63 677.5 318.5)"/><ellipse cx="425.1" cy="675.1" rx="4.3" ry="3.0" transform="rotate(134 425.1 675.1)"/><ellipse cx="731.6" cy="584.4" rx="4.0" ry="3.0" transform="rotate(24 731.6 584.4)"/><ellipse cx="578.0" cy="680.8" rx="2.9" ry="2.0" transform="rotate(90 578.0 680.8)"/><ellipse cx="782.7" cy="400.0" rx="2.6" ry="1.5" transform="rotate(-30 782.7 400.0)"/><ellipse cx="765.1" cy="533.2" rx="2.0" ry="1.5" transform="rotate(5 765.1 533.2)"/><ellipse cx="788.9" cy="449.3" rx="2.2" ry="2.0" transform="rotate(-18 788.9 449.3)"/><ellipse cx="660.3" cy="657.6" rx="1.6" ry="1.5" transform="rotate(60 660.3 657.6)"/><ellipse cx="681.5" cy="317.3" rx="4.4" ry="2.5" transform="rotate(-63 681.5 317.3)"/><ellipse cx="363.6" cy="546.4" rx="5.3" ry="3.0" transform="rotate(172 363.6 546.4)"/><ellipse cx="686.5" cy="618.3" rx="5.9" ry="3.5" transform="rotate(44 686.5 618.3)"/><ellipse cx="727.0" cy="565.0" rx="1.7" ry="1.5" transform="rotate(19 727.0 565.0)"/><ellipse cx="372.9" cy="632.5" rx="3.2" ry="3.0" transform="rotate(150 372.9 632.5)"/><ellipse cx="376.8" cy="525.2" rx="1.5" ry="1.0" transform="rotate(177 376.8 525.2)"/><ellipse cx="784.4" cy="386.3" rx="5.3" ry="3.5" transform="rotate(-32 784.4 386.3)"/><ellipse cx="373.6" cy="592.4" rx="2.8" ry="2.0" transform="rotate(159 373.6 592.4)"/><ellipse cx="537.6" cy="702.7" rx="1.0" ry="1.0" transform="rotate(103 537.6 702.7)"/><ellipse cx="779.9" cy="390.2" rx="3.0" ry="2.0" transform="rotate(-32 779.9 390.2)"/><ellipse cx="681.5" cy="324.0" rx="1.5" ry="1.5" transform="rotate(-62 681.5 324.0)"/><ellipse cx="751.1" cy="537.5" rx="1.2" ry="1.0" transform="rotate(7 751.1 537.5)"/><ellipse cx="382.3" cy="611.7" rx="2.3" ry="1.5" transform="rotate(154 382.3 611.7)"/><ellipse cx="763.9" cy="481.6" rx="3.1" ry="2.0" transform="rotate(-10 763.9 481.6)"/><ellipse cx="775.5" cy="489.6" rx="3.2" ry="2.0" transform="rotate(-8 775.5 489.6)"/><ellipse cx="670.6" cy="644.1" rx="1.9" ry="1.5" transform="rotate(55 670.6 644.1)"/><ellipse cx="588.4" cy="335.3" rx="2.2" ry="2.0" transform="rotate(-87 588.4 335.3)"/><ellipse cx="472.4" cy="702.2" rx="2.1" ry="1.5" transform="rotate(120 472.4 702.2)"/><ellipse cx="402.6" cy="656.6" rx="2.6" ry="2.5" transform="rotate(141 402.6 656.6)"/><ellipse cx="376.2" cy="525.8" rx="1.6" ry="1.0" transform="rotate(177 376.2 525.8)"/><ellipse cx="565.9" cy="330.7" rx="3.2" ry="2.0" transform="rotate(-94 565.9 330.7)"/><ellipse cx="423.6" cy="466.6" rx="2.3" ry="1.5" transform="rotate(-163 423.6 466.6)"/><ellipse cx="610.7" cy="666.5" rx="4.2" ry="2.5" transform="rotate(78 610.7 666.5)"/><ellipse cx="785.3" cy="443.2" rx="1.5" ry="1.2" transform="rotate(-19 785.3 443.2)"/><ellipse cx="785.4" cy="462.5" rx="6.2" ry="3.5" transform="rotate(-14 785.4 462.5)"/><ellipse cx="617.9" cy="319.1" rx="3.3" ry="2.0" transform="rotate(-79 617.9 319.1)"/><ellipse cx="751.5" cy="545.1" rx="1.9" ry="1.5" transform="rotate(10 751.5 545.1)"/><ellipse cx="732.2" cy="565.3" rx="3.1" ry="3.0" transform="rotate(18 732.2 565.3)"/><ellipse cx="765.5" cy="530.8" rx="2.6" ry="2.5" transform="rotate(5 765.5 530.8)"/><ellipse cx="369.6" cy="515.2" rx="1.2" ry="1.0" transform="rotate(-180 369.6 515.2)"/><ellipse cx="410.2" cy="481.4" rx="2.5" ry="2.0" transform="rotate(-169 410.2 481.4)"/><ellipse cx="480.1" cy="718.2" rx="3.5" ry="2.0" transform="rotate(116 480.1 718.2)"/><ellipse cx="764.3" cy="368.4" rx="1.2" ry="1.2" transform="rotate(-38 764.3 368.4)"/><ellipse cx="638.6" cy="323.7" rx="5.3" ry="3.0" transform="rotate(-73 638.6 323.7)"/><ellipse cx="773.9" cy="503.6" rx="3.3" ry="3.0" transform="rotate(-3 773.9 503.6)"/><ellipse cx="688.9" cy="627.8" rx="3.3" ry="2.0" transform="rotate(46 688.9 627.8)"/><ellipse cx="520.8" cy="369.7" rx="2.7" ry="2.0" transform="rotate(-112 520.8 369.7)"/><ellipse cx="513.8" cy="706.6" rx="1.8" ry="1.5" transform="rotate(109 513.8 706.6)"/><ellipse cx="403.2" cy="483.6" rx="4.4" ry="3.5" transform="rotate(-170 403.2 483.6)"/><ellipse cx="747.3" cy="562.2" rx="3.0" ry="2.0" transform="rotate(16 747.3 562.2)"/><ellipse cx="609.2" cy="321.8" rx="3.4" ry="3.0" transform="rotate(-81 609.2 321.8)"/><ellipse cx="478.6" cy="396.2" rx="2.4" ry="1.5" transform="rotate(-130 478.6 396.2)"/><ellipse cx="380.7" cy="641.1" rx="2.5" ry="2.0" transform="rotate(148 380.7 641.1)"/><ellipse cx="562.4" cy="692.0" rx="2.3" ry="2.0" transform="rotate(95 562.4 692.0)"/><ellipse cx="670.6" cy="323.6" rx="3.4" ry="2.0" transform="rotate(-65 670.6 323.6)"/><ellipse cx="538.4" cy="699.2" rx="3.6" ry="2.0" transform="rotate(103 538.4 699.2)"/><ellipse cx="659.1" cy="655.4" rx="1.8" ry="1.2" transform="rotate(60 659.1 655.4)"/><ellipse cx="371.6" cy="523.2" rx="2.5" ry="1.5" transform="rotate(178 371.6 523.2)"/><ellipse cx="764.9" cy="477.3" rx="1.2" ry="1.2" transform="rotate(-12 764.9 477.3)"/><ellipse cx="483.4" cy="716.2" rx="1.6" ry="1.2" transform="rotate(116 483.4 716.2)"/><ellipse cx="568.3" cy="341.7" rx="1.1" ry="1.0" transform="rotate(-94 568.3 341.7)"/><ellipse cx="493.4" cy="711.4" rx="1.3" ry="1.0" transform="rotate(114 493.4 711.4)"/><ellipse cx="502.3" cy="375.2" rx="1.5" ry="1.0" transform="rotate(-119 502.3 375.2)"/><ellipse cx="402.8" cy="662.8" rx="2.7" ry="2.0" transform="rotate(140 402.8 662.8)"/><ellipse cx="768.0" cy="479.9" rx="1.5" ry="1.5" transform="rotate(-11 768.0 479.9)"/><ellipse cx="674.4" cy="626.4" rx="2.0" ry="1.2" transform="rotate(49 674.4 626.4)"/><ellipse cx="388.5" cy="644.9" rx="1.8" ry="1.2" transform="rotate(146 388.5 644.9)"/><ellipse cx="764.2" cy="520.5" rx="3.1" ry="2.0" transform="rotate(2 764.2 520.5)"/><ellipse cx="746.4" cy="541.5" rx="2.7" ry="2.0" transform="rotate(9 746.4 541.5)"/><ellipse cx="359.9" cy="529.4" rx="3.0" ry="2.0" transform="rotate(176 359.9 529.4)"/><ellipse cx="760.8" cy="521.0" rx="1.3" ry="1.0" transform="rotate(2 760.8 521.0)"/><ellipse cx="538.7" cy="343.7" rx="3.7" ry="2.5" transform="rotate(-103 538.7 343.7)"/><ellipse cx="770.6" cy="485.5" rx="1.0" ry="1.0" transform="rotate(-9 770.6 485.5)"/><ellipse cx="517.7" cy="359.0" rx="1.7" ry="1.2" transform="rotate(-111 517.7 359.0)"/><ellipse cx="776.1" cy="490.6" rx="2.5" ry="2.0" transform="rotate(-7 776.1 490.6)"/><ellipse cx="634.3" cy="657.7" rx="3.5" ry="2.5" transform="rotate(69 634.3 657.7)"/><ellipse cx="590.6" cy="323.3" rx="1.8" ry="1.0" transform="rotate(-87 590.6 323.3)"/><ellipse cx="698.5" cy="606.1" rx="2.7" ry="2.5" transform="rotate(37 698.5 606.1)"/><ellipse cx="350.7" cy="580.2" rx="2.3" ry="1.5" transform="rotate(164 350.7 580.2)"/><ellipse cx="654.3" cy="320.6" rx="2.5" ry="1.5" transform="rotate(-69 654.3 320.6)"/><ellipse cx="571.6" cy="344.7" rx="3.9" ry="3.5" transform="rotate(-93 571.6 344.7)"/><ellipse cx="779.9" cy="459.6" rx="1.5" ry="1.5" transform="rotate(-16 779.9 459.6)"/><ellipse cx="570.9" cy="695.1" rx="2.2" ry="2.0" transform="rotate(93 570.9 695.1)"/><ellipse cx="497.9" cy="718.9" rx="3.0" ry="2.0" transform="rotate(112 497.9 718.9)"/><ellipse cx="772.8" cy="381.8" rx="2.7" ry="2.0" transform="rotate(-35 772.8 381.8)"/><ellipse cx="726.3" cy="563.0" rx="4.1" ry="3.0" transform="rotate(18 726.3 563.0)"/><ellipse cx="730.3" cy="579.8" rx="5.0" ry="3.0" transform="rotate(23 730.3 579.8)"/><ellipse cx="689.7" cy="602.0" rx="2.7" ry="2.0" transform="rotate(38 689.7 602.0)"/><ellipse cx="419.0" cy="467.6" rx="1.0" ry="1.0" transform="rotate(-163 419.0 467.6)"/><ellipse cx="462.4" cy="402.7" rx="3.7" ry="3.5" transform="rotate(-136 462.4 402.7)"/><ellipse cx="648.6" cy="662.5" rx="1.5" ry="1.5" transform="rotate(65 648.6 662.5)"/><ellipse cx="542.0" cy="333.0" rx="6.9" ry="6.0" transform="rotate(-20 542.0 333.0)"/><ellipse cx="511.0" cy="346.0" rx="3.6" ry="3.0" transform="rotate(-20 511.0 346.0)"/><ellipse cx="757.0" cy="364.0" rx="5.9" ry="4.5" transform="rotate(-40 757.0 364.0)"/><ellipse cx="782.0" cy="352.0" rx="4.8" ry="3.0" transform="rotate(-40 782.0 352.0)"/><ellipse cx="779.0" cy="541.0" rx="8.0" ry="8.0" transform="rotate(0 779.0 541.0)"/><ellipse cx="757.0" cy="565.0" rx="4.8" ry="4.0" transform="rotate(0 757.0 565.0)"/><ellipse cx="738.0" cy="581.0" rx="7.2" ry="4.5" transform="rotate(-30 738.0 581.0)"/><ellipse cx="724.0" cy="590.0" rx="3.9" ry="3.0" transform="rotate(0 724.0 590.0)"/><ellipse cx="745.0" cy="318.0" rx="4.5" ry="3.0" transform="rotate(-40 745.0 318.0)"/><ellipse cx="401.0" cy="461.0" rx="9.0" ry="5.0" transform="rotate(-35 401.0 461.0)"/><ellipse cx="392.0" cy="472.0" rx="6.0" ry="4.0" transform="rotate(-30 392.0 472.0)"/><ellipse cx="409.0" cy="480.0" rx="7.2" ry="4.5" transform="rotate(-30 409.0 480.0)"/><ellipse cx="414.0" cy="489.0" rx="5.6" ry="3.5" transform="rotate(-30 414.0 489.0)"/><ellipse cx="418.0" cy="436.0" rx="4.5" ry="3.0" transform="rotate(-35 418.0 436.0)"/><ellipse cx="425.0" cy="461.0" rx="5.6" ry="3.5" transform="rotate(-35 425.0 461.0)"/><ellipse cx="420.0" cy="448.0" rx="4.8" ry="3.0" transform="rotate(-35 420.0 448.0)"/><ellipse cx="377.0" cy="520.0" rx="3.6" ry="3.0" transform="rotate(0 377.0 520.0)"/><ellipse cx="366.0" cy="560.0" rx="2.5" ry="2.5" transform="rotate(0 366.0 560.0)"/><ellipse cx="645.0" cy="299.0" rx="2.0" ry="2.0" transform="rotate(0 645.0 299.0)"/><ellipse cx="533.0" cy="730.0" rx="3.6" ry="3.0" transform="rotate(0 533.0 730.0)"/><ellipse cx="800.0" cy="478.0" rx="6.3" ry="3.5" transform="rotate(-40 800.0 478.0)"/><ellipse cx="810.0" cy="466.0" rx="2.8" ry="2.0" transform="rotate(-40 810.0 466.0)"/><ellipse cx="742.0" cy="601.0" rx="3.6" ry="3.0" transform="rotate(0 742.0 601.0)"/><ellipse cx="455.0" cy="428.0" rx="7.6" ry="4.0" transform="rotate(-35 455.0 428.0)"/><ellipse cx="466.0" cy="438.0" rx="6.6" ry="3.5" transform="rotate(-35 466.0 438.0)"/><ellipse cx="478.0" cy="422.0" rx="5.4" ry="3.0" transform="rotate(-35 478.0 422.0)"/><ellipse cx="452.0" cy="446.0" rx="5.4" ry="3.0" transform="rotate(-35 452.0 446.0)"/><ellipse cx="462.0" cy="452.0" rx="4.7" ry="2.6" transform="rotate(-35 462.0 452.0)"/><ellipse cx="556.0" cy="330.0" rx="3.4" ry="2.4" transform="rotate(-30 556.0 330.0)"/><ellipse cx="568.0" cy="322.0" rx="2.8" ry="2.0" transform="rotate(-30 568.0 322.0)"/><ellipse cx="386.0" cy="498.0" rx="4.8" ry="3.0" transform="rotate(-35 386.0 498.0)"/><ellipse cx="680.0" cy="625.0" rx="6.0" ry="3.5" transform="rotate(-35 680.0 625.0)"/><ellipse cx="672.0" cy="640.0" rx="4.5" ry="3.0" transform="rotate(-30 672.0 640.0)"/><ellipse cx="690.0" cy="610.0" rx="4.4" ry="2.6" transform="rotate(-35 690.0 610.0)"/></g><rect x="540" y="290" width="290" height="330" fill="url(#yl)" clip-path="url(#bc)"/></g>
<g fill="#fff" filter="url(#rough)"><ellipse cx="438.2" cy="485.9" rx="1.8" ry="1.0" transform="rotate(-168 438.2 485.9)"/><ellipse cx="662.1" cy="603.6" rx="3.3" ry="1.3" transform="rotate(47 662.1 603.6)"/><ellipse cx="629.8" cy="348.9" rx="2.8" ry="1.6" transform="rotate(-73 629.8 348.9)"/><ellipse cx="490.4" cy="682.9" rx="2.4" ry="1.3" transform="rotate(118 490.4 682.9)"/><ellipse cx="682.0" cy="590.7" rx="4.5" ry="2.4" transform="rotate(36 682.0 590.7)"/><ellipse cx="750.2" cy="480.2" rx="3.2" ry="1.3" transform="rotate(-12 750.2 480.2)"/><ellipse cx="716.7" cy="367.6" rx="3.5" ry="1.3" transform="rotate(-47 716.7 367.6)"/><ellipse cx="692.3" cy="343.1" rx="4.7" ry="1.6" transform="rotate(-57 692.3 343.1)"/><ellipse cx="704.1" cy="563.9" rx="1.9" ry="1.0" transform="rotate(21 704.1 563.9)"/><ellipse cx="586.8" cy="661.2" rx="3.0" ry="1.6" transform="rotate(87 586.8 661.2)"/><ellipse cx="756.9" cy="490.0" rx="2.2" ry="1.0" transform="rotate(-8 756.9 490.0)"/><ellipse cx="573.9" cy="370.2" rx="4.4" ry="1.6" transform="rotate(-92 573.9 370.2)"/><ellipse cx="691.1" cy="351.7" rx="6.9" ry="2.4" transform="rotate(-56 691.1 351.7)"/><ellipse cx="765.6" cy="430.5" rx="2.2" ry="1.3" transform="rotate(-25 765.6 430.5)"/><ellipse cx="478.1" cy="685.0" rx="4.5" ry="1.6" transform="rotate(121 478.1 685.0)"/><ellipse cx="500.2" cy="417.4" rx="1.5" ry="1.0" transform="rotate(-129 500.2 417.4)"/><ellipse cx="377.6" cy="554.7" rx="4.9" ry="2.4" transform="rotate(169 377.6 554.7)"/><ellipse cx="640.0" cy="344.3" rx="2.3" ry="1.3" transform="rotate(-70 640.0 344.3)"/><ellipse cx="470.3" cy="686.5" rx="2.9" ry="1.0" transform="rotate(122 470.3 686.5)"/><ellipse cx="680.6" cy="341.0" rx="2.5" ry="1.0" transform="rotate(-60 680.6 341.0)"/><ellipse cx="403.9" cy="625.6" rx="4.7" ry="1.6" transform="rotate(148 403.9 625.6)"/><ellipse cx="413.6" cy="497.9" rx="3.8" ry="1.6" transform="rotate(-174 413.6 497.9)"/><ellipse cx="538.1" cy="675.6" rx="3.7" ry="2.0" transform="rotate(104 538.1 675.6)"/><ellipse cx="376.7" cy="563.7" rx="3.6" ry="2.0" transform="rotate(167 376.7 563.7)"/><ellipse cx="539.2" cy="383.9" rx="2.4" ry="1.0" transform="rotate(-107 539.2 383.9)"/><ellipse cx="395.4" cy="624.9" rx="3.0" ry="1.3" transform="rotate(149 395.4 624.9)"/><ellipse cx="435.1" cy="650.8" rx="4.2" ry="2.4" transform="rotate(137 435.1 650.8)"/><ellipse cx="740.4" cy="389.2" rx="5.1" ry="2.0" transform="rotate(-38 740.4 389.2)"/><ellipse cx="378.2" cy="557.9" rx="3.2" ry="2.0" transform="rotate(168 378.2 557.9)"/><ellipse cx="430.0" cy="657.8" rx="1.9" ry="1.0" transform="rotate(136 430.0 657.8)"/><ellipse cx="438.6" cy="666.2" rx="4.1" ry="1.6" transform="rotate(133 438.6 666.2)"/><ellipse cx="718.8" cy="363.7" rx="7.1" ry="2.4" transform="rotate(-47 718.8 363.7)"/><ellipse cx="729.3" cy="386.1" rx="2.1" ry="1.3" transform="rotate(-41 729.3 386.1)"/><ellipse cx="660.2" cy="626.8" rx="3.6" ry="1.3" transform="rotate(54 660.2 626.8)"/><ellipse cx="601.3" cy="351.4" rx="2.9" ry="1.6" transform="rotate(-82 601.3 351.4)"/><ellipse cx="758.7" cy="500.4" rx="5.3" ry="2.4" transform="rotate(-5 758.7 500.4)"/><ellipse cx="607.5" cy="642.5" rx="5.9" ry="2.0" transform="rotate(77 607.5 642.5)"/><ellipse cx="644.5" cy="342.8" rx="2.7" ry="1.3" transform="rotate(-69 644.5 342.8)"/><ellipse cx="546.5" cy="673.7" rx="2.0" ry="1.3" transform="rotate(102 546.5 673.7)"/><ellipse cx="463.9" cy="440.7" rx="4.7" ry="1.6" transform="rotate(-147 463.9 440.7)"/><ellipse cx="388.2" cy="598.7" rx="2.5" ry="1.0" transform="rotate(156 388.2 598.7)"/><ellipse cx="397.5" cy="523.0" rx="2.9" ry="1.6" transform="rotate(178 397.5 523.0)"/><ellipse cx="582.1" cy="669.8" rx="3.3" ry="2.0" transform="rotate(89 582.1 669.8)"/><ellipse cx="609.5" cy="338.0" rx="2.7" ry="1.0" transform="rotate(-80 609.5 338.0)"/><ellipse cx="451.7" cy="670.1" rx="2.1" ry="1.3" transform="rotate(130 451.7 670.1)"/><ellipse cx="435.6" cy="662.5" rx="3.8" ry="2.0" transform="rotate(134 435.6 662.5)"/><ellipse cx="761.8" cy="466.4" rx="4.6" ry="1.6" transform="rotate(-15 761.8 466.4)"/><ellipse cx="510.8" cy="683.5" rx="6.3" ry="2.4" transform="rotate(112 510.8 683.5)"/><ellipse cx="742.1" cy="525.6" rx="2.0" ry="1.0" transform="rotate(4 742.1 525.6)"/><ellipse cx="388.8" cy="582.0" rx="2.4" ry="1.0" transform="rotate(161 388.8 582.0)"/><ellipse cx="737.5" cy="364.2" rx="2.5" ry="1.3" transform="rotate(-44 737.5 364.2)"/><ellipse cx="405.8" cy="504.8" rx="5.1" ry="2.0" transform="rotate(-176 405.8 504.8)"/><ellipse cx="581.9" cy="360.1" rx="4.5" ry="2.4" transform="rotate(-89 581.9 360.1)"/><ellipse cx="541.2" cy="370.1" rx="2.9" ry="1.3" transform="rotate(-105 541.2 370.1)"/><ellipse cx="482.7" cy="428.8" rx="5.4" ry="2.0" transform="rotate(-138 482.7 428.8)"/><ellipse cx="384.6" cy="591.5" rx="3.3" ry="1.6" transform="rotate(159 384.6 591.5)"/><ellipse cx="734.7" cy="523.5" rx="2.1" ry="1.0" transform="rotate(3 734.7 523.5)"/><ellipse cx="437.1" cy="668.4" rx="3.4" ry="1.6" transform="rotate(133 437.1 668.4)"/><ellipse cx="589.2" cy="660.5" rx="3.8" ry="1.3" transform="rotate(86 589.2 660.5)"/><ellipse cx="503.6" cy="418.9" rx="5.9" ry="2.4" transform="rotate(-128 503.6 418.9)"/><ellipse cx="750.9" cy="473.5" rx="5.0" ry="2.0" transform="rotate(-14 750.9 473.5)"/><ellipse cx="765.0" cy="407.1" rx="3.8" ry="1.6" transform="rotate(-30 765.0 407.1)"/><ellipse cx="494.9" cy="420.6" rx="2.9" ry="1.3" transform="rotate(-132 494.9 420.6)"/><ellipse cx="712.4" cy="357.8" rx="4.2" ry="2.4" transform="rotate(-50 712.4 357.8)"/><ellipse cx="537.1" cy="384.3" rx="5.5" ry="2.4" transform="rotate(-108 537.1 384.3)"/><ellipse cx="543.9" cy="385.0" rx="4.7" ry="1.6" transform="rotate(-105 543.9 385.0)"/><ellipse cx="449.7" cy="467.7" rx="2.7" ry="1.3" transform="rotate(-160 449.7 467.7)"/><ellipse cx="534.0" cy="389.3" rx="3.8" ry="2.0" transform="rotate(-110 534.0 389.3)"/><ellipse cx="443.8" cy="446.5" rx="3.7" ry="1.3" transform="rotate(-153 443.8 446.5)"/><ellipse cx="700.5" cy="573.3" rx="5.1" ry="2.0" transform="rotate(26 700.5 573.3)"/></g>
<g fill="#22c4e6" filter="url(#rough)"><ellipse cx="594" cy="698" rx="7.4" ry="5.6" transform="rotate(-30 594 698)"/><ellipse cx="619" cy="681" rx="3.6" ry="2.6" transform="rotate(-30 619 681)"/><ellipse cx="630" cy="674" rx="2.4" ry="1.6" transform="rotate(-30 630 674)"/></g><g fill="#9a3cf0"><ellipse cx="533" cy="730" rx="3.4" ry="2.4" transform="rotate(-30 533 730)"/><circle cx="410" cy="718" r="1.5"/><circle cx="498" cy="727" r="1.6"/></g>
<g filter="url(#rough2)">
<path fill="#000" fill-rule="evenodd" d="M417 377 Q418 371 426 370 L714 343 Q734 341 733 360 L703 651 Q703 658 696 659 L480 678 Q468 679 466 670 Z M439 393 L478 662 L686 644 L712 367 Z"/>
<path d="M421 374 L489 354 L450 372 Z" fill="#000"/>
<path d="M430 366 Q470 356 515 350 Q470 362 436 372 Z" fill="#000"/>
<path d="M700 660 Q660 682 603 697" fill="none" stroke="#000" stroke-width="1.6" stroke-dasharray="14 3 6 2"/>
<path d="M640 666 L700 657 L706 664 Z" fill="#000"/>
<path d="M686 656 L712 650 L708 662 Z" fill="#000"/>
</g>
<g fill="none" stroke-linecap="round">
<path d="M462 371.6 L556 362.6 L600 359.6 L600 360.8 L556 365 L463 376.4 Z" fill="#fff" stroke="none"/>
<path d="M520 379 L700 361" stroke="#ff8a30" stroke-width="1.5"/>
<path d="M600 365 L690 355" stroke="#ffb030" stroke-width="1.4"/>
<path d="M640 381 L706 372" stroke="#ffa030" stroke-width="1.2"/>
<path d="M578 391 L600 389" stroke="#ff8030" stroke-width="1.2" />
<path d="M713 470 L700 600" stroke="#ffb030" stroke-width="1"/>
<path d="M560 670 L660 661" stroke="#c9a0ff" stroke-width="1"/>
<path d="M448 476 L460 566 L471.5 640" stroke="url(#rb)" stroke-width="1.7" stroke-dasharray="70 3 60 2"/>
<path d="M648 662 L698 656" stroke="#fff" stroke-width="1"/>
<path d="M700 585 L696 640" stroke="#fff" stroke-width=".9"/>
</g>
<g fill="none" stroke="#000" stroke-width="1.5">
<path d="M466 414 L501 645 L664 633 L689 393 L607 403" stroke-dasharray="60 2 30 3 12 2"/>
<path d="M466 414 L560 409" stroke-dasharray="40 3 20 2"/>
<path d="M565 617 L661 607 L684 440" stroke-dasharray="30 3 50 2 18 3" stroke-width="1.2"/>
</g>
<path d="M544 440 L526 461 L526 514 L544 507 Z" fill="#24361a"/>
<path d="M505 522 L544 540 L544 581 L647 513 L647 557 L546 626 L505 601 Z" fill="url(#dk)"/>
<path d="M544 440 L647 513 L544 581 L544 540 L505 522 L544 507 Z" fill="#fff"/>

</svg><!--ART_END-->
<!-- orange button -->
<div class="abs" style="left:323px;top:697px;width:89px;height:89px;border-radius:11px;background:#ff732e"></div>
<svg style="left:345px;top:718px" width="46" height="46" viewBox="0 0 46 46"><path d="M5 23 H37 M22.6 6.4 L38.6 23 L22.6 39.6" fill="none" stroke="#fff" stroke-width="5.2"/></svg>
<!-- status bar -->
<div class="abs" style="left:61px;top:848px;width:231px;height:16px;background:#565656"></div>
<div class="abs cj" style="left:68px;top:850px;font-size:12px;color:#e2e2e2;letter-spacing:-1px">㗊7 矶</div>
<div class="abs cj" style="left:144px;top:850px;font-size:12px;color:#dcdcdc;letter-spacing:-0.3px">㫚晤 ㄍ用岳 㕦㕡仴</div>
<div class="abs" style="left:846px;top:848px;width:7px;height:16px;background:#515151"></div>
<!--CANVAS-->
<!--RIGHT_START-->
<!-- right icon strip -->
<div class="abs" style="left:872px;top:71px;width:38px;height:13px;background:#424242;"></div>
<div class="abs" style="left:896px;top:75px;width:6px;height:3px;background:repeating-linear-gradient(90deg,#b5b5b5 0 1.2px,transparent 1.2px 2.2px)"></div>
<div class="abs" style="left:872px;top:122px;width:38px;height:2px;background:#3d3d3d;"></div>
<div class="abs" style="left:872px;top:154px;width:38px;height:2px;background:#3d3d3d;"></div>
<div class="abs" style="left:872px;top:183px;width:38px;height:2px;background:#3d3d3d;"></div>
<div class="abs" style="left:872px;top:226px;width:38px;height:2px;background:#3d3d3d;"></div>
<svg style="left:872px;top:84px" width="38" height="150" viewBox="0 0 38 150"><g fill="none" stroke="#efefef" stroke-width="2">
<path d="M12.4 27 V17 Q12.4 11.6 19 11.6 Q25.6 11.6 25.6 17 V27 H21.6 V19 H16.4 V27 Z"/>
<path d="M11.6 48.6 H26.6 V60.6 H11.6 Z M19 48.6 V60.6 M11.6 58 H26.6" stroke-width="1.7"/>
<path d="M11.6 83 L14 80 H24.6 L26.4 83 V91 H11.6 Z M17.6 80 V91" stroke="#d6d6d6" stroke-width="1.7"/>
<path d="M12.4 133 V120.6 L17 118.4 V131 M21 118.4 L25.6 120.6 V133 H21 Z M17 118.4 H21" stroke-width="2.1"/>
</g></svg>
<div class="abs" style="left:852px;top:108px;width:19px;height:17px;background:#4e4e4e;"></div>
<div class="abs" style="left:860px;top:114px;width:0;height:0;border-left:2.5px solid transparent;border-right:2.5px solid transparent;border-bottom:3px solid #777"></div>
<!-- right panels -->
<div class="abs" style="left:912px;top:71px;width:240px;height:12px;background:#3c3c3c;"></div>
<div class="abs" style="left:1141px;top:75px;width:6px;height:3px;background:repeating-linear-gradient(90deg,#b5b5b5 0 1.2px,transparent 1.2px 2.2px)"></div>
<div class="abs" style="left:912px;top:210px;width:240px;height:12px;background:#3c3c3c;"></div>
<div class="abs" style="left:1141px;top:214px;width:6px;height:3px;background:repeating-linear-gradient(90deg,#b5b5b5 0 1.2px,transparent 1.2px 2.2px)"></div>
<div class="abs" style="left:912px;top:434px;width:240px;height:12px;background:#3c3c3c;"></div>
<div class="abs" style="left:1141px;top:438px;width:6px;height:3px;background:repeating-linear-gradient(90deg,#b5b5b5 0 1.2px,transparent 1.2px 2.2px)"></div>
<div class="abs" style="left:1014px;top:438px;width:6px;height:3px;background:repeating-linear-gradient(90deg,#8a8a8a 0 1.2px,transparent 1.2px 2.2px)"></div>
<div class="abs" style="left:910px;top:71px;width:2px;height:793px;background:#3f3f3f;"></div>
<div class="abs" style="left:912px;top:83px;width:240px;height:26px;background:#404040;"></div>
<div class="abs" style="left:912px;top:83px;width:44px;height:26px;background:#535353;"></div>
<div class="abs" style="left:956px;top:83px;width:41px;height:25px;background:#494949;"></div>
<div class="abs cj" style="left:921px;top:90px;font-size:12.5px;color:#f4f4f4;letter-spacing:-0.6px;font-weight:bold;">翦蓢</div>
<div class="abs cj" style="left:965px;top:90px;font-size:11.5px;color:#a2a2a2;letter-spacing:-0.8px;">琟囤</div>
<svg style="left:1136px;top:91px" width="15" height="12" viewBox="0 0 15 12"><path d="M1.2 3.6 H13.4 V9.6 H1.2 Z M9 3.6 L10 2 H12.4 L13 3.6" fill="none" stroke="#e6e6e6" stroke-width="1.6"/></svg>
<div class="abs" style="left:912px;top:222px;width:240px;height:26px;background:#404040;"></div>
<div class="abs" style="left:912px;top:222px;width:44px;height:26px;background:#535353;"></div>
<div class="abs" style="left:956px;top:222px;width:41px;height:25px;background:#494949;"></div>
<div class="abs cj" style="left:921px;top:229px;font-size:12.5px;color:#f4f4f4;letter-spacing:-0.6px;font-weight:bold;">箇羼</div>
<div class="abs cj" style="left:965px;top:229px;font-size:11.5px;color:#a2a2a2;letter-spacing:-0.8px;">揖嶲</div>
<svg style="left:1136px;top:230px" width="15" height="12" viewBox="0 0 15 12"><path d="M1.2 3.6 H13.4 V9.6 H1.2 Z M9 3.6 L10 2 H12.4 L13 3.6" fill="none" stroke="#e6e6e6" stroke-width="1.6"/></svg>
<div class="abs" style="left:912px;top:446px;width:240px;height:26px;background:#404040;"></div>
<div class="abs" style="left:912px;top:446px;width:44px;height:26px;background:#535353;"></div>
<div class="abs" style="left:956px;top:446px;width:41px;height:25px;background:#494949;"></div>
<div class="abs cj" style="left:921px;top:453px;font-size:12.5px;color:#f4f4f4;letter-spacing:-0.6px;font-weight:bold;">䈊筬</div>
<div class="abs cj" style="left:965px;top:453px;font-size:11.5px;color:#a2a2a2;letter-spacing:-0.8px;">鑽茜</div>
<svg style="left:1136px;top:454px" width="15" height="12" viewBox="0 0 15 12"><path d="M1.2 3.6 H13.4 V9.6 H1.2 Z M9 3.6 L10 2 H12.4 L13 3.6" fill="none" stroke="#e6e6e6" stroke-width="1.6"/></svg>
<svg style="left:1004px;top:453px" width="20" height="14" viewBox="0 0 20 14"><g fill="#8c8c8c"><rect x="1" y="0.6" width="11" height="3"/><rect x="1" y="4.6" width="11" height="3"/><rect x="1" y="8.6" width="11" height="3"/><rect x="13.6" y="9.6" width="1" height="2.4"/><rect x="15.6" y="9.6" width="1" height="2.4"/></g></svg>
<div class="abs" style="left:921px;top:120px;width:72px;height:18px;background:#3b3b3b;border-radius:2px"></div>
<div class="abs cj" style="left:925px;top:123px;font-size:12.5px;color:#f4f4f4;letter-spacing:-1.4px;font-weight:bold;">釾羿牂⁓</div>
<div class="abs" style="left:983px;top:127px;width:0;height:0;border-top:2.4px solid transparent;border-bottom:2.4px solid transparent;border-left:3.4px solid #bcbcbc"></div>
<svg style="left:1003px;top:119px" width="132" height="18" viewBox="0 0 132 18"><g fill="none" stroke="#d8d8d8" stroke-width="1.7">
<path d="M2.6 5 H12.6 M7.6 5 V14.6 M4.6 14.4 H10.6 M4 9.4 H11.2" stroke-width="1.5"/>
<path d="M25.6 14.4 L30.6 4.6 L35.6 14.4 Z" stroke-width="1.5"/>
<path d="M47.6 5 H57.4 L48.4 14.2 H57.6 M50 9.6 H56" stroke-width="1.6"/>
<path d="M68.6 5 H78.8 M71.6 5 V14.4 M75.8 5 V14.4 M71.6 14.4 H75.8" stroke-width="1.6"/>
<rect x="91.6" y="4.6" width="8" height="10.2" stroke-width="1.7"/>
</g><path d="M118.4 2 H128.6 V9 H125 V11.4 H122 V9 H118.4 Z" fill="#d0d0d0"/><rect x="122.6" y="12.4" width="2" height="2.4" fill="#9a9a9a"/></svg>
<div class="abs" style="left:912px;top:141px;width:240px;height:1px;background:#5f5f5f;"></div>
<div class="abs" style="left:912px;top:142px;width:240px;height:1px;background:#474747;"></div>
<div class="abs" style="left:921px;top:149px;width:104px;height:17px;background:#3b3b3b;border-radius:2px"></div>
<div class="abs cj" style="left:925px;top:152px;font-size:12.5px;color:#f4f4f4;letter-spacing:-1.2px;font-weight:bold;">佉罾ᵗ</div>
<svg style="left:1015px;top:152px" width="8" height="11" viewBox="0 0 8 11"><path d="M1.6 1.6 L6 5.4 L1.6 9.2" fill="none" stroke="#c4c4c4" stroke-width="1.5"/></svg>
<div class="abs cj" style="left:1032px;top:152px;font-size:12px;color:#f0f0f0;letter-spacing:-0.9px;font-weight:bold;transform:scaleX(1.12);transform-origin:0 0;">脜儙蚝</div>
<div class="abs" style="left:1076px;top:149px;width:55px;height:17px;background:#3b3b3b;border-radius:2px"></div>
<div class="abs cj" style="left:1079px;top:152px;font-size:11.5px;color:#e9e9e9;letter-spacing:-1.5px;">㑉毌日</div>
<svg style="left:1117px;top:152px" width="11" height="11" viewBox="0 0 11 11"><path d="M1.6 4 L4.6 8.6 L8.8 2.6 M6.4 2 L8.8 2.6" fill="none" stroke="#bdbdbd" stroke-width="1.3"/></svg>
<div class="abs" style="left:912px;top:169px;width:240px;height:1px;background:#5f5f5f;"></div>
<div class="abs" style="left:912px;top:170px;width:240px;height:1px;background:#474747;"></div>
<div class="abs cj" style="left:921px;top:180px;font-size:11.5px;color:#f0f0f0;letter-spacing:-0.6px;font-weight:bold;">戕汜</div>
<svg style="left:955px;top:176px" width="82" height="18" viewBox="0 0 82 18">
<path d="M2 14 L10.6 2.4 L15.4 6 L11.4 15.2 L6 13.6 Z" fill="#8e8e8e"/>
<path d="M25 10 L32 3.6 L37.6 6.6 L36 14.4 L29 13 Z" fill="#c3c3c3"/><path d="M30 8.6 L33.4 7" stroke="#535353" stroke-width="1.4"/>
<path d="M47 8.6 L54 3 L53.4 7.4 L59 6 L56 10 L58.6 14.4 L53 12.4 L50.6 15.6 L50 11.4 Z" fill="#dadada"/>
<path d="M67.6 3.6 H77.6 V6.6 H79.4 V10.4 H76 V15 H70 V10.4 H67 V7.4 H67.6 Z" fill="#e2e2e2"/></svg>
<div class="abs cj" style="left:1043px;top:180px;font-size:11.5px;color:#e4e4e4;letter-spacing:-1.8px;font-weight:bold;">颾嫗</div>
<div class="abs" style="left:1068px;top:179px;width:2px;height:12px;background:repeating-linear-gradient(180deg,#c8c8c8 0 2px,transparent 2px 4.6px)"></div>
<div class="abs" style="left:1076px;top:177px;width:55px;height:17px;background:#3b3b3b;border-radius:2px"></div>
<div class="abs cj" style="left:1079px;top:180px;font-size:11.5px;color:#e9e9e9;letter-spacing:-1.5px;">佣留仃</div>
<svg style="left:1117px;top:180px" width="11" height="11" viewBox="0 0 11 11"><path d="M1.6 3.4 L5 8.6 L8.8 2.6" fill="none" stroke="#bdbdbd" stroke-width="1.3"/></svg>
<div class="abs" style="left:958px;top:201px;width:8px;height:5px;background:repeating-linear-gradient(90deg,#a9a9a9 0 2px,transparent 2px 3px)"></div>
<div class="abs" style="left:984px;top:201px;width:6px;height:5px;border:1px solid #a0a0a0;border-top-width:2px"></div>
<div class="abs" style="left:934px;top:272px;width:20px;height:19px;background:#fff;box-shadow:0 0 0 1px #484848"></div>
<div class="abs" style="left:923px;top:261px;width:20px;height:20px;background:#000;border:1.6px solid #f2f2f2"></div>
<div class="abs" style="left:963px;top:261px;width:132px;height:147px;background:linear-gradient(180deg,rgba(0,0,0,0) 0%,rgba(0,0,0,.30) 40%,rgba(0,0,0,.72) 72%,#000 97%),linear-gradient(90deg,#fff 0%,#ff7c08 100%)"></div>
<div class="abs" style="left:1112px;top:261px;width:21px;height:148px;background:linear-gradient(180deg,#ff0018 0%,#ff0030 8%,#ff10ff 20%,#c010ff 27%,#1020ff 35%,#0060ff 41%,#00e8ff 52%,#00ff90 60%,#10e010 68%,#a0ff00 77%,#ffff00 84%,#ffa000 92%,#ff2010 100%)"></div>
<svg style="left:1040px;top:421px" width="54" height="12" viewBox="0 0 54 12"><path d="M2 10.6 Q3 6.6 5.4 6 Q6 2.4 8 2.4 Q10.6 6 12.6 10.6 Z" fill="#cfcfcf"/><path d="M40 10.6 Q40.6 6 44 5.6 Q45 2 47 2.6 Q47.4 5.6 50.4 6 Q51.4 9 50.6 10.6 Z" fill="#cfcfcf"/><path d="M45 6 V9" stroke="#535353" stroke-width="1.2"/></svg>
<svg style="left:0;top:0" width="0" height="0"><defs><linearGradient id="tg" x1="0" y1="1" x2="1" y2="0"><stop offset="0" stop-color="#a030ff"/><stop offset=".3" stop-color="#4a70ff"/><stop offset=".45" stop-color="#30d890"/><stop offset=".6" stop-color="#ff7a30"/><stop offset="1" stop-color="#ffc830"/></linearGradient><linearGradient id="tg2" x1="0" y1="1" x2="1" y2="0"><stop offset="0" stop-color="#8a30ff"/><stop offset=".3" stop-color="#3a90ff"/><stop offset=".5" stop-color="#40e070"/><stop offset=".7" stop-color="#ff7a30"/><stop offset="1" stop-color="#ff9a30"/></linearGradient></defs></svg>
<div class="abs" style="left:912px;top:472px;width:240px;height:368px;background:#4d4d4d;"></div>
<div class="abs" style="left:912px;top:472px;width:31px;height:368px;background:#4f4f4f;"></div>
<div class="abs" style="left:943px;top:472px;width:1px;height:368px;background:#484848;"></div>
<div class="abs" style="left:1141px;top:540px;width:11px;height:300px;background:#505050;"></div>
<div class="abs" style="left:912px;top:521px;width:240px;height:1px;background:#424242;"></div>
<div class="abs" style="left:912px;top:522px;width:240px;height:18px;background:#4b4b4b;"></div>
<div class="abs" style="left:943px;top:540px;width:198px;height:44px;background:#464646;"></div>
<div class="abs" style="left:943px;top:584px;width:198px;height:42px;background:linear-gradient(90deg,#696969,#747474 60%,#707070);"></div>
<div class="abs" style="left:943px;top:626px;width:198px;height:79px;background:#4c4c4c;"></div>
<div class="abs" style="left:943px;top:705px;width:198px;height:41px;background:linear-gradient(90deg,#6a6a6a,#747474 60%,#6e6e6e);"></div>
<div class="abs" style="left:912px;top:746px;width:229px;height:1px;background:#464646;"></div>
<div class="abs" style="left:912px;top:789px;width:229px;height:1px;background:#464646;"></div>
<div class="abs" style="left:912px;top:832px;width:240px;height:7px;background:#515151;"></div>
<div class="abs" style="left:912px;top:838px;width:240px;height:2px;background:#444;"></div>
<div class="abs" style="left:912px;top:840px;width:240px;height:24px;background:#535353;"></div>
<svg style="left:921px;top:494px" width="15" height="12" viewBox="0 0 15 12"><path d="M1 6 Q7.5 -1.4 14 6 Q7.5 13.4 1 6 Z" fill="#fafafa"/><ellipse cx="7.5" cy="6" rx="3.7" ry="3" fill="#3e3e3e"/></svg>
<svg style="left:964px;top:484px" width="33" height="33" viewBox="0 0 33 33"><rect x=".5" y=".5" width="32" height="32" fill="#fdfdfd" stroke="#2c2c2c"/><g transform="translate(16.5 17)"><ellipse rx="13.4" ry="9" transform="rotate(-40)" fill="url(#tg)"/><circle cx="-6" cy="5.6" r="5" fill="#a030f0"/><circle cx="6.6" cy="-6.6" r="5" fill="#ffae30"/><circle cx="8.6" cy="-2" r="3.6" fill="#ff8a30"/><path d="M-8 -6.4 L4.8 -7.8 L4 5.8 L-5.4 7 Z" fill="url(#tg2)" stroke="#141414" stroke-width="1.3"/><path d="M-3.2 -4 L2.6 0 L-3.2 4 Z" fill="#fff"/><path d="M-5.2 1.6 L-3.2 .6 V4 L2.6 0 V2.2 L-3 6 L-5.2 4.8 Z" fill="#10301a"/><circle cx="-11" cy="-6" r=".7" fill="#c9a0e0"/><circle cx="11" cy="8" r=".7" fill="#f0c080"/><circle cx="-9" cy="11" r=".7" fill="#c9a0e0"/><circle cx="2" cy="-12" r=".7" fill="#f0c080"/></g></svg>
<div class="abs cj" style="left:1003px;top:495px;font-size:11.5px;color:#f6f6f6;letter-spacing:-0.5px;font-weight:bold;">㫗髙仃</div>
<svg style="left:920px;top:527px" width="17" height="10" viewBox="0 0 17 10"><path d="M1 9 V2.6 Q1 1.4 2.2 1.4 H6 V8 M9.6 9 V1.4 H14.6 Q15.6 1.4 15.6 2.6 V9" fill="none" stroke="#bdbdbd" stroke-width="1.3"/></svg>
<div class="abs cj" style="left:948px;top:526px;font-size:10.5px;color:#e0e0e0;letter-spacing:-0.9px;font-weight:bold;">ㄔ㫗属抖执</div>
<svg style="left:964px;top:546px" width="33" height="33" viewBox="0 0 33 33"><rect x=".5" y=".5" width="32" height="32" fill="#fdfdfd" stroke="#2c2c2c"/><g transform="translate(16.5 17)"><ellipse rx="13.4" ry="9" transform="rotate(-40)" fill="url(#tg)"/><circle cx="-6" cy="5.6" r="5" fill="#a030f0"/><circle cx="6.6" cy="-6.6" r="5" fill="#ffae30"/><circle cx="8.6" cy="-2" r="3.6" fill="#ff8a30"/><path d="M-8 -6.4 L4.8 -7.8 L4 5.8 L-5.4 7 Z" fill="url(#tg2)" stroke="#141414" stroke-width="1.3"/><path d="M-3.2 -4 L2.6 0 L-3.2 4 Z" fill="#fff"/><path d="M-5.2 1.6 L-3.2 .6 V4 L2.6 0 V2.2 L-3 6 L-5.2 4.8 Z" fill="#10301a"/><circle cx="-11" cy="-6" r=".7" fill="#c9a0e0"/><circle cx="11" cy="8" r=".7" fill="#f0c080"/><circle cx="-9" cy="11" r=".7" fill="#c9a0e0"/><circle cx="2" cy="-12" r=".7" fill="#f0c080"/></g></svg>
<div class="abs cj" style="left:1003px;top:557px;font-size:11.5px;color:#f6f6f6;letter-spacing:-1.2px;font-weight:bold;">氕旬仃</div>
<svg style="left:1119px;top:557px" width="13" height="12" viewBox="0 0 13 12"><path d="M6.5 1 L12 6 L6.5 11 L1 6 Z" fill="none" stroke="#b9b9b9" stroke-width="1.3"/><path d="M5 6 H8 M6.5 4.4 V7.6" stroke="#b0b0b0" stroke-width="1"/></svg>
<svg style="left:921px;top:599px" width="15" height="12" viewBox="0 0 15 12"><path d="M1 6 Q7.5 -1.4 14 6 Q7.5 13.4 1 6 Z" fill="#fafafa"/><ellipse cx="7.5" cy="6" rx="3.7" ry="3" fill="#3e3e3e"/></svg>
<svg style="left:964px;top:589px" width="33" height="33" viewBox="0 0 33 33"><rect x=".5" y=".5" width="32" height="32" fill="#fdfdfd" stroke="#2c2c2c"/><g transform="translate(16.5 17)"><ellipse rx="13.4" ry="9" transform="rotate(-40)" fill="url(#tg)"/><circle cx="-6" cy="5.6" r="5" fill="#a030f0"/><circle cx="6.6" cy="-6.6" r="5" fill="#ffae30"/><circle cx="8.6" cy="-2" r="3.6" fill="#ff8a30"/><path d="M-8 -6.4 L4.8 -7.8 L4 5.8 L-5.4 7 Z" fill="url(#tg2)" stroke="#141414" stroke-width="1.3"/><path d="M-3.2 -4 L2.6 0 L-3.2 4 Z" fill="#fff"/><path d="M-5.2 1.6 L-3.2 .6 V4 L2.6 0 V2.2 L-3 6 L-5.2 4.8 Z" fill="#10301a"/><circle cx="-11" cy="-6" r=".7" fill="#c9a0e0"/><circle cx="11" cy="8" r=".7" fill="#f0c080"/><circle cx="-9" cy="11" r=".7" fill="#c9a0e0"/><circle cx="2" cy="-12" r=".7" fill="#f0c080"/></g></svg>
<div class="abs cj" style="left:1003px;top:600px;font-size:11.5px;color:#f6f6f6;letter-spacing:-1.2px;font-weight:bold;">㠯㫗仃</div>
<svg style="left:1119px;top:599px" width="13" height="12" viewBox="0 0 13 12"><path d="M6.5 1 L12 6 L6.5 11 L1 6 Z" fill="none" stroke="#b9b9b9" stroke-width="1.3"/><path d="M5 6 H8 M6.5 4.4 V7.6" stroke="#b0b0b0" stroke-width="1"/></svg>
<div class="abs" style="left:977px;top:629px;width:7px;height:7px;background:#a5a5a5;transform:rotate(45deg)"></div>
<div class="abs cj" style="left:989px;top:634px;font-size:10.5px;color:#e2e2e2;letter-spacing:-0.2px;font-weight:bold;">庁雁囲</div>
<svg style="left:984px;top:652px" width="14" height="11" viewBox="0 0 14 11"><path d="M1.6 5.6 H12.6 M4.6 2 V9.4 M8.6 2 V9.4" fill="none" stroke="#b5b5b5" stroke-width="1.2"/></svg>
<div class="abs cj" style="left:1001px;top:653px;font-size:10.5px;color:#e2e2e2;letter-spacing:-0.3px;font-weight:bold;">帗再茲</div>
<svg style="left:988px;top:671px" width="7" height="11" viewBox="0 0 7 11"><path d="M3.4 1 Q6 5 5 8.6 Q3.4 10.6 1.8 8.6 Q1 5 3.4 1 Z" fill="none" stroke="#c4c4c4" stroke-width="1.1"/></svg>
<div class="abs cj" style="left:998px;top:671px;font-size:10.5px;color:#ececec;letter-spacing:0.4px;font-weight:bold;">罱晋囗匥冂</div>
<div class="abs" style="left:979px;top:691px;width:5px;height:7px;border-radius:2px;background:#9d9d9d"></div>
<div class="abs cj" style="left:988px;top:691px;font-size:8.5px;color:#c4c4c4;letter-spacing:0.8px;font-weight:bold;">仔舋</div>
<div class="abs" style="left:922px;top:697px;width:13px;height:3px;background:repeating-linear-gradient(90deg,#777 0 1.2px,transparent 1.2px 2.2px)"></div>
<svg style="left:921px;top:719px" width="15" height="12" viewBox="0 0 15 12"><path d="M1 6 Q7.5 -1.4 14 6 Q7.5 13.4 1 6 Z" fill="#fafafa"/><ellipse cx="7.5" cy="6" rx="3.7" ry="3" fill="#3e3e3e"/></svg>
<svg style="left:964px;top:709px" width="33" height="33" viewBox="0 0 33 33"><rect x=".5" y=".5" width="32" height="32" fill="#fdfdfd" stroke="#2c2c2c"/><g transform="translate(16.5 17)"><ellipse rx="13.4" ry="9" transform="rotate(-40)" fill="url(#tg)"/><circle cx="-6" cy="5.6" r="5" fill="#a030f0"/><circle cx="6.6" cy="-6.6" r="5" fill="#ffae30"/><circle cx="8.6" cy="-2" r="3.6" fill="#ff8a30"/><path d="M-8 -6.4 L4.8 -7.8 L4 5.8 L-5.4 7 Z" fill="url(#tg2)" stroke="#141414" stroke-width="1.3"/><path d="M-3.2 -4 L2.6 0 L-3.2 4 Z" fill="#fff"/><path d="M-5.2 1.6 L-3.2 .6 V4 L2.6 0 V2.2 L-3 6 L-5.2 4.8 Z" fill="#10301a"/><circle cx="-11" cy="-6" r=".7" fill="#c9a0e0"/><circle cx="11" cy="8" r=".7" fill="#f0c080"/><circle cx="-9" cy="11" r=".7" fill="#c9a0e0"/><circle cx="2" cy="-12" r=".7" fill="#f0c080"/></g></svg>
<div class="abs cj" style="left:1003px;top:719px;font-size:12.5px;color:#f6f6f6;letter-spacing:0.2px;font-weight:bold;">ĦdὐᲘᲘ</div>
<svg style="left:1119px;top:719px" width="13" height="12" viewBox="0 0 13 12"><path d="M6.5 1 L12 6 L6.5 11 L1 6 Z" fill="none" stroke="#b9b9b9" stroke-width="1.3"/><path d="M5 6 H8 M6.5 4.4 V7.6" stroke="#b0b0b0" stroke-width="1"/></svg>
<svg style="left:921px;top:762px" width="15" height="12" viewBox="0 0 15 12"><path d="M1 6 Q7.5 -1.4 14 6 Q7.5 13.4 1 6 Z" fill="#fafafa"/><ellipse cx="7.5" cy="6" rx="3.7" ry="3" fill="#3e3e3e"/></svg>
<svg style="left:994px;top:753px" width="27" height="31" viewBox="0 0 27 31"><rect x=".5" y=".5" width="26" height="30" fill="#fdfdfd" stroke="#2c2c2c"/><g transform="translate(13.5 15.5)"><ellipse rx="6" ry="4.4" transform="rotate(-35)" fill="url(#tg)"/><circle cx="-3" cy="-2.6" r="2" fill="#5a7cff"/><circle cx="2.6" cy="2.4" r="2.2" fill="#ff8a30"/><path d="M-2.6 -3 L3 -3.6 L2.6 3 L-2 3.4 Z" fill="none" stroke="#7a5a3a" stroke-width=".8"/><path d="M-1 -1.6 L1.8 0 L-1 1.8 Z" fill="#fff"/></g></svg>
<div class="abs cj" style="left:1028px;top:763px;font-size:11.5px;color:#f6f6f6;letter-spacing:-0.8px;font-weight:bold;">昗㐃</div>
<svg style="left:1119px;top:762px" width="13" height="12" viewBox="0 0 13 12"><path d="M6.5 1 L12 6 L6.5 11 L1 6 Z" fill="none" stroke="#b9b9b9" stroke-width="1.3"/><path d="M5 6 H8 M6.5 4.4 V7.6" stroke="#b0b0b0" stroke-width="1"/></svg>
<svg style="left:921px;top:805px" width="15" height="12" viewBox="0 0 15 12"><path d="M1 6 Q7.5 -1.4 14 6 Q7.5 13.4 1 6 Z" fill="#fafafa"/><ellipse cx="7.5" cy="6" rx="3.7" ry="3" fill="#3e3e3e"/></svg>
<svg style="left:964px;top:795px" width="33" height="33" viewBox="0 0 33 33"><rect x=".5" y=".5" width="32" height="32" fill="#fdfdfd" stroke="#2c2c2c"/><g transform="translate(16.5 17)"><ellipse rx="13.4" ry="9" transform="rotate(-40)" fill="url(#tg)"/><circle cx="-6" cy="5.6" r="5" fill="#a030f0"/><circle cx="6.6" cy="-6.6" r="5" fill="#ffae30"/><circle cx="8.6" cy="-2" r="3.6" fill="#ff8a30"/><path d="M-8 -6.4 L4.8 -7.8 L4 5.8 L-5.4 7 Z" fill="url(#tg2)" stroke="#141414" stroke-width="1.3"/><path d="M-3.2 -4 L2.6 0 L-3.2 4 Z" fill="#fff"/><path d="M-5.2 1.6 L-3.2 .6 V4 L2.6 0 V2.2 L-3 6 L-5.2 4.8 Z" fill="#10301a"/><circle cx="-11" cy="-6" r=".7" fill="#c9a0e0"/><circle cx="11" cy="8" r=".7" fill="#f0c080"/><circle cx="-9" cy="11" r=".7" fill="#c9a0e0"/><circle cx="2" cy="-12" r=".7" fill="#f0c080"/></g></svg>
<div class="abs cj" style="left:1003px;top:806px;font-size:11.5px;color:#f6f6f6;letter-spacing:-1.0px;font-weight:bold;">㫗佢囗</div>
<svg style="left:1119px;top:805px" width="13" height="12" viewBox="0 0 13 12"><path d="M6.5 1 L12 6 L6.5 11 L1 6 Z" fill="none" stroke="#b9b9b9" stroke-width="1.3"/><path d="M5 6 H8 M6.5 4.4 V7.6" stroke="#b0b0b0" stroke-width="1"/></svg>
<svg style="left:964px;top:843px" width="170" height="18" viewBox="0 0 170 18">
<g fill="none" stroke="#9b9b9b" stroke-width="1.5"><path d="M4 4 L8 6 L12.6 3 M8 6 V10 M4.6 10.6 L11 12 M5 15 H11"/><path d="M30 12 L36 6 L38 11 L43.6 4.6 M36 6 L34.6 14.6 M40 9 L44 14" stroke-width="1.7"/></g>
<path d="M60.6 15.6 L62 9 L68 3.6 L74.4 5 L72.6 9.4 L75 15 L68 13 Z" fill="#e4e4e4"/><path d="M66 8 L70 7" stroke="#535353" stroke-width="1.3"/>
<path d="M91 4 H101 L104.4 7 V15 H91 Z" fill="none" stroke="#ededed" stroke-width="2"/><path d="M95 10 H101 M98 7.4 V12.6" stroke="#ededed" stroke-width="1.6"/>
<path d="M122.6 15.6 V4 H130 Q134 4 134 8 V12 L136 15.6 M126.6 8 V15.6 M126.6 8 H130.4 V12" fill="none" stroke="#ededed" stroke-width="2.1"/>
<path d="M154 3.6 H165.6 V15.6 H154 Z" fill="#9d9d9d"/><path d="M154 3.6 V15.6 M156 5.6 H164" stroke="#c4c4c4" stroke-width="1"/></svg>
<!--RIGHT_END-->
</body>
</html>
